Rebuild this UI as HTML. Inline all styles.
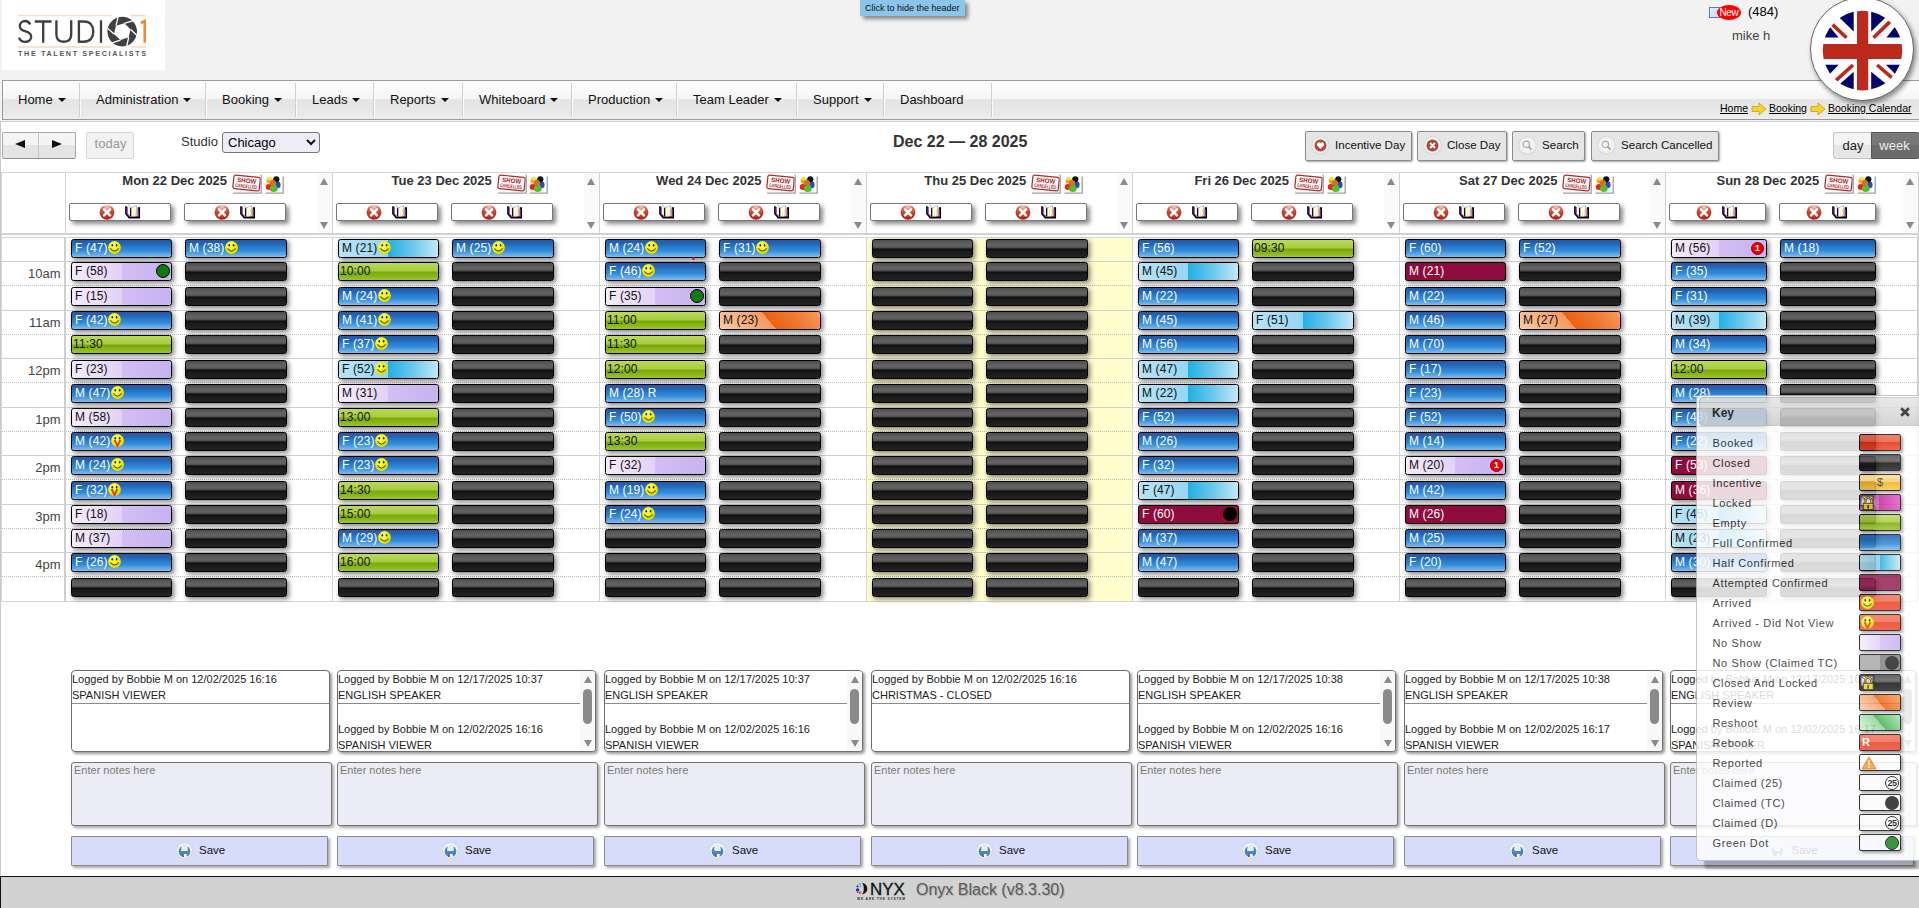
<!DOCTYPE html><html><head><meta charset="utf-8"><style>
*{box-sizing:border-box;margin:0;padding:0}
html,body{width:1919px;height:908px;overflow:hidden;background:#f2f2f2;font-family:"Liberation Sans",sans-serif;color:#333;position:relative}
.a{position:absolute}
.logo{left:2px;top:0;width:163px;height:70px;background:#fff}
.tip{left:860px;top:0;width:105px;height:16px;background:#8cc4ea;box-shadow:3px 3px 4px rgba(0,0,0,.45);font-size:9px;color:#111;line-height:16px;padding-left:5px;white-space:nowrap}
.nav{left:2px;top:80px;width:1925px;height:40px;border:1px solid #9a9a9a;background:linear-gradient(#fefefe 0%,#f6f6f6 45%,#e4e4e4 50%,#e8e8e8 80%,#eeeeee 100%)}
.ni{position:absolute;top:0;height:38px;font-size:13px;color:#111;line-height:38px;white-space:nowrap}
.ns{position:absolute;top:2px;width:2px;height:34px;border-left:1px solid #d0d0d0;border-right:1px solid #fafafa}
.car{display:inline-block;width:0;height:0;border-left:4px solid transparent;border-right:4px solid transparent;border-top:4.5px solid #111;vertical-align:middle;margin-left:5px;position:relative;top:-1px}
.content{left:0;top:121px;width:1919px;height:755px;background:#fff;border-top:1px solid #cfcfcf;border-left:1px solid #c8c8c8}
.bc{font-size:10.5px;color:#000;text-decoration:underline;white-space:nowrap;line-height:12px}
.btn{border:1px solid #8a8a8a;border-radius:2px;background:#e6e6e6;box-shadow:1px 1px 2px rgba(0,0,0,.35);font-size:11.6px;color:#111;white-space:nowrap;line-height:27px}
.ico{position:absolute;top:5px;width:17px;height:17px;border-radius:50%;background:radial-gradient(circle at 50% 45%,#fafafa 0%,#f0f0f0 60%,#d8d8d8 100%);box-shadow:0 0 1px rgba(0,0,0,.4)}
.hl{background:#d2d2d2}
.vl{background:#d2d2d2}
.ev{position:absolute;height:19px;border:1px solid #000;border-radius:2.5px;box-shadow:2px 2px 5px rgba(0,0,0,.5);font-size:12px;line-height:17px;padding-left:3px;white-space:nowrap;overflow:hidden;color:#111;letter-spacing:0.12px}
.bk{background:linear-gradient(#4c4c4c 0%,#5e5e5e 20%,#636363 35%,#474747 48%,#0d0d0d 52%,#1a1a1a 65%,#232323 100%);border-color:#000}
.fc{background:linear-gradient(#2459a6 0%,#2766b6 25%,#2a7fd0 45%,#2e88d8 60%,#4c9ce2 75%,#80bcec 100%);color:#fff}
.ns2{background:linear-gradient(90deg,#f4ecfc 0%,#e2d2f6 50%,#d4bef4 50%,#c8b2f0 100%)}
.em{background:linear-gradient(#bcd85c 0%,#a9cc40 45%,#7aaa0a 55%,#86b418 75%,#9cc62e 100%);padding-left:1px}
.hc{background:linear-gradient(90deg,#b8e4f6 0%,#94d6f2 50%,#22b0e2 50%,#6cc8ec 75%,#c4e8f6 100%)}
.ac{background:#8e0c3c;color:#fff}
.rv{background:linear-gradient(50deg,#fdcaa4 0%,#f29a5e 49%,#ec600e 49%,#f07a34 75%,#f89a5c 100%)}
.smi{display:inline-block;width:13px;height:13px;vertical-align:top;margin-top:1px;margin-left:0.5px;position:relative}.smi svg{position:absolute;left:0;top:0}


.gd{position:absolute;right:1px;top:1px;width:14px;height:14px;border-radius:50%;background:#0a7a0a;border:1.3px solid #000}
.bd{position:absolute;right:1px;top:1px;width:14px;height:14px;border-radius:50%;background:#000}
.rb{position:absolute;right:2px;top:2px;width:13px;height:13px;border-radius:50%;background:#e00;border:1px solid #900;color:#fff;font-size:9px;font-weight:bold;line-height:11px;text-align:center}
.tl{position:absolute;font-size:13px;color:#444;text-align:right;width:56px;left:3px}
.hbtn{position:absolute;height:18px;background:#fff;border:1px solid #777;border-radius:2px;box-shadow:3px 3px 4px rgba(0,0,0,.45)}
.dt{position:absolute;font-size:13px;font-weight:bold;color:#333;white-space:nowrap;line-height:15px}
.log{position:absolute;height:82px;border:1px solid #6e6e6e;border-radius:4px;background:#fff;box-shadow:2px 2px 3px rgba(0,0,0,.4);font-size:11px;color:#222;line-height:16px;overflow:hidden}
.ta{position:absolute;height:64px;border:1px solid #767676;border-radius:3px;background:#ececf6;box-shadow:2px 2px 3px rgba(0,0,0,.35);font-size:11px;color:#7a7a7a;padding:1px 2px}
.sv{position:absolute;height:30px;border:1px solid #8a8a8a;border-radius:1px;background:#d6dcfa;box-shadow:2px 2px 3px rgba(0,0,0,.35);font-size:12px;color:#111}
</style></head><body><div class="a logo">
<svg width="163" height="70" viewBox="2 0 163 70" style="position:absolute;left:0;top:0">
<g stroke="#fbd8bc" stroke-width="1.4">
<line x1="18" y1="15.6" x2="111.5" y2="15.6"/><line x1="130.6" y1="15.6" x2="145.8" y2="15.6"/>
<line x1="18" y1="47" x2="111.5" y2="47"/><line x1="130.6" y1="47" x2="145.8" y2="47"/>
</g>
<g fill="none" stroke="#404042" stroke-width="2.35">
<path d="M30.2 24.4 C29 22 27.2 21 25.2 21 C22 21 19.8 23.2 19.8 26.2 C19.8 29.5 22.5 30.5 25.6 31.3 C29 32.2 31.2 34 31.2 36.8 C31.2 40 28.5 41.8 25.2 41.8 C22 41.8 19.8 40 19 37.6"/>
<path d="M34.8 21.5 H51.6 M43.2 21.5 V42.8"/>
<path d="M56.4 20.3 V34.5 C56.4 39.5 59.5 41.7 63.8 41.7 C68.1 41.7 71.2 39.5 71.2 34.5 V20.3"/>
<path d="M78.9 20.3 V42.8 M78.9 21.5 H84 C90 21.5 93.3 25.5 93.3 31.6 C93.3 37.7 90 41.7 84 41.7 H78.9"/>
<path d="M101 20.3 V42.8"/>
</g>
<circle cx="122.2" cy="31.6" r="14.8" fill="#404042"/>
<polygon points="113.95,34.04 116.01,25.63 124.28,23.26 130.47,29.23 128.69,37.24 120.41,40.01" fill="#fff"/>
<g stroke="#fff" stroke-width="1.3"><line x1="113.95" y1="34.04" x2="107.03" y2="27.64"/><line x1="116.01" y1="25.63" x2="118.26" y2="16.43"/><line x1="124.28" y1="23.26" x2="133.40" y2="20.64"/><line x1="130.47" y1="29.23" x2="137.29" y2="35.82"/><line x1="128.69" y1="37.24" x2="126.61" y2="46.64"/><line x1="120.41" y1="40.01" x2="111.45" y2="43.01"/></g>
<path d="M140.8 23.2 L144.7 21 V42.8" fill="none" stroke="#f28a2a" stroke-width="2.5"/>
<text x="18" y="55.8" font-family="Liberation Sans" font-size="7.2" font-weight="bold" fill="#5a5a5c" textLength="128" lengthAdjust="spacing">THE TALENT SPECIALISTS</text>
</svg>
</div>
<div class="a tip">Click to hide the header</div>
<div class="a" style="left:1709px;top:7px;width:11px;height:11px;border:1px solid #4f7fc8;background:linear-gradient(135deg,#e8f0fa,#c8d8f0)"></div>
<div class="a" style="left:1717px;top:5px;width:24px;height:15px;border-radius:50%;background:#f00;color:#fff;font-size:10px;line-height:15px;text-align:center;letter-spacing:-0.3px">New</div>
<div class="a" style="left:1748px;top:4px;font-size:13px;color:#000;line-height:16px">(484)</div>
<div class="a" style="left:1732px;top:27.5px;font-size:13px;color:#444;line-height:16px">mike h</div>
<div class="a nav">
<div class="ni" style="left:15px">Home<span class=car></span></div>
<div class="ns" style="left:76px"></div>
<div class="ni" style="left:93px">Administration<span class=car></span></div>
<div class="ns" style="left:202px"></div>
<div class="ni" style="left:219px">Booking<span class=car></span></div>
<div class="ns" style="left:292px"></div>
<div class="ni" style="left:309px">Leads<span class=car></span></div>
<div class="ns" style="left:370px"></div>
<div class="ni" style="left:387px">Reports<span class=car></span></div>
<div class="ns" style="left:459px"></div>
<div class="ni" style="left:476px">Whiteboard<span class=car></span></div>
<div class="ns" style="left:568px"></div>
<div class="ni" style="left:585px">Production<span class=car></span></div>
<div class="ns" style="left:673px"></div>
<div class="ni" style="left:690px">Team Leader<span class=car></span></div>
<div class="ns" style="left:793px"></div>
<div class="ni" style="left:810px">Support<span class=car></span></div>
<div class="ns" style="left:880px"></div>
<div class="ni" style="left:897px">Dashboard</div>
<div class="ns" style="left:988px"></div>
</div>
<div class="a" style="left:1810px;top:-3px;width:104px;height:104px;border-radius:50%;background:#fff;border:1px solid #666;box-shadow:2px 3px 5px rgba(0,0,0,.45)"></div>
<svg class="a" style="left:1822px;top:10px" width="81" height="81" viewBox="0 0 81 81">
<defs><clipPath id="fc"><circle cx="40.5" cy="40.6" r="39.8"/></clipPath></defs>
<g clip-path="url(#fc)">
<rect x="-5" y="-5" width="91" height="91" fill="#fbfbfb"/>
<polygon points="31.7,21.4 31.7,-5 4.4,-5" fill="#00036a"/>
<polygon points="16.7,27.6 -5,27.6 -5,1.4" fill="#00036a"/>
<polygon points="49.2,21.4 49.2,-5 76.3,-5" fill="#00036a"/>
<polygon points="64.5,27.6 86,27.6 86,0" fill="#00036a"/>
<polygon points="16.7,54.8 -5,54.8 -5,77" fill="#00036a"/>
<polygon points="31.7,61.7 31.7,86 4.4,86" fill="#00036a"/>
<polygon points="49.2,61.7 49.2,86 79,86" fill="#00036a"/>
<polygon points="64,54.8 86,54.8 86,77" fill="#00036a"/>
<g stroke="#bc2a1e" stroke-width="3.6">
<line x1="8.5" y1="12.6" x2="24.5" y2="27.8"/>
<line x1="69" y1="10.6" x2="51.5" y2="27.8"/>
<line x1="13.2" y1="71.2" x2="31" y2="55"/>
<line x1="55.2" y1="55" x2="70.4" y2="68.2"/>
</g>
<rect x="35" y="-5" width="11.2" height="91" fill="#bc2a1e"/>
<rect x="-5" y="34" width="91" height="15" fill="#bc2a1e"/>
</g></svg>
<div class="a bc" style="left:1720px;top:102px">Home</div>
<svg class="a" style="left:1751px;top:102px" width="16" height="14" viewBox="0 0 16 14"><path d="M1 4.5 H8 V1 L15 7 L8 13 V9.5 H1 Z" fill="#f6d22a" stroke="#c8a010" stroke-width="0.8"/></svg>
<div class="a bc" style="left:1769px;top:102px">Booking</div>
<svg class="a" style="left:1810px;top:102px" width="16" height="14" viewBox="0 0 16 14"><path d="M1 4.5 H8 V1 L15 7 L8 13 V9.5 H1 Z" fill="#f6d22a" stroke="#c8a010" stroke-width="0.8"/></svg>
<div class="a bc" style="left:1828px;top:102px">Booking Calendar</div>
<div class="a content"></div>
<div class="a" style="left:1.5px;top:132px;width:74px;height:27px;border:1px solid #aaa;border-bottom-color:#8f8f8f;border-radius:2px;background:linear-gradient(#f4f4f4 0%,#f4f4f4 50%,#e4e4e4 50%,#e4e4e4 100%)"></div>
<div class="a" style="left:38px;top:133px;width:1px;height:25px;background:#c4c4c4"></div>
<div class="a" style="left:15px;top:140px;width:0;height:0;border-top:4.5px solid transparent;border-bottom:4.5px solid transparent;border-right:10px solid #111"></div>
<div class="a" style="left:52px;top:140px;width:0;height:0;border-top:4.5px solid transparent;border-bottom:4.5px solid transparent;border-left:10px solid #111"></div>
<div class="a" style="left:86px;top:132px;width:48px;height:27px;border:1px solid #d6d6d6;border-radius:2px;background:#f2f2f2;color:#999;font-size:13px;line-height:22px;text-align:center;padding-left:1px">today</div>
<div class="a" style="left:181px;top:134px;font-size:13px;color:#333;line-height:15px">Studio</div>
<div class="a" style="left:222px;top:132px;width:98px;height:21px;border:1px solid #767676;border-radius:3px;background:#ededf8;font-size:13px;color:#000;line-height:19px;padding-left:5px">Chicago<svg style="position:absolute;left:83px;top:6px" width="10" height="7" viewBox="0 0 10 7"><path d="M1 1 L5 5 L9 1" fill="none" stroke="#111" stroke-width="2"/></svg></div>
<div class="a" style="left:893px;top:133px;font-size:16px;font-weight:bold;color:#333;line-height:18px;white-space:nowrap">Dec 22 — 28 2025</div>

<div class="a btn" style="left:1305px;top:131px;width:107px;height:30px"><div class="ico" style="left:6px"><svg width="17" height="17" viewBox="0 0 17 17" style="position:absolute;left:0;top:0"><circle cx="8.5" cy="8.5" r="6" fill="#b44a3c"/><path d="M8.5 12 L5.2 8.6 A1.9 1.9 0 0 1 8.5 6.3 A1.9 1.9 0 0 1 11.8 8.6 Z" fill="#fff"/></svg></div><span style="position:absolute;left:29px;top:-1px">Incentive Day</span></div>
<div class="a btn" style="left:1417px;top:131px;width:90px;height:30px"><div class="ico" style="left:6px"><svg width="17" height="17" viewBox="0 0 17 17" style="position:absolute;left:0;top:0"><circle cx="8.5" cy="8.5" r="6" fill="#a8483e"/><path d="M6 6 L11 11 M11 6 L6 11" stroke="#fff" stroke-width="1.8"/></svg></div><span style="position:absolute;left:29px;top:-1px">Close Day</span></div>
<div class="a btn" style="left:1512px;top:131px;width:73px;height:30px"><div class="ico" style="left:6px"><svg width="17" height="17" viewBox="0 0 17 17" style="position:absolute;left:0;top:0"><circle cx="7.3" cy="7.3" r="3.2" fill="#eef4fa" stroke="#9aa" stroke-width="1.1"/><path d="M9.6 9.6 L12.6 12.6" stroke="#c9a060" stroke-width="1.8"/></svg></div><span style="position:absolute;left:29px;top:-1px">Search</span></div>
<div class="a btn" style="left:1591px;top:131px;width:128px;height:30px"><div class="ico" style="left:6px"><svg width="17" height="17" viewBox="0 0 17 17" style="position:absolute;left:0;top:0"><circle cx="7.3" cy="7.3" r="3.2" fill="#eef4fa" stroke="#9aa" stroke-width="1.1"/><path d="M9.6 9.6 L12.6 12.6" stroke="#c9a060" stroke-width="1.8"/></svg></div><span style="position:absolute;left:29px;top:-1px">Search Cancelled</span></div>
<div class="a" style="left:1833px;top:132px;width:39px;height:27px;border:1px solid #c4c4c4;border-right:none;border-radius:3px 0 0 3px;background:linear-gradient(#f4f4f4 0%,#f4f4f4 50%,#e6e6e6 50%,#e6e6e6 100%);font-size:13px;color:#222;line-height:25px;text-align:center">day</div>
<div class="a" style="left:1871px;top:132px;width:49px;height:27px;border:1px solid #555;border-radius:0 3px 3px 0;padding-right:2px;background:linear-gradient(#7a7a7a 0%,#777 50%,#6c6c6c 50%,#6c6c6c 100%);font-size:13px;color:#f0f0f0;line-height:25px;text-align:center">week</div>
<div class="a" style="left:1px;top:172px;width:1917px;height:1px;background:#d6d6d6"></div>
<div class="a" style="left:1px;top:172px;width:1px;height:429px;background:#d6d6d6"></div>
<div class="a" style="left:1917px;top:172px;width:2px;height:430px;background:#cfcfcf"></div>
<div class="a" style="left:1px;top:233px;width:1917px;height:2px;background:#d2d2d2"></div>
<div class="a" style="left:1px;top:237px;width:1917px;height:1px;background:#d6d6d6"></div>
<div class="a vl" style="left:65px;top:172px;width:1px;height:61px"></div>
<div class="a" style="left:317px;top:173px;width:15px;height:60px;background:#fafafa"></div>
<div class="a" style="left:320px;top:178px;width:0;height:0;border-left:4.5px solid transparent;border-right:4.5px solid transparent;border-bottom:7px solid #8a8a8a"></div>
<div class="a" style="left:320px;top:222px;width:0;height:0;border-left:4.5px solid transparent;border-right:4.5px solid transparent;border-top:7px solid #8a8a8a"></div>
<div class="dt" style="left:122.3px;top:173px">Mon 22 Dec 2025</div>
<div class="a" style="left:232.1px;top:174px;width:30px;height:20px"><svg width="30" height="20" viewBox="0 0 30 20"><g transform="rotate(6 14.5 9)"><rect x="1.3" y="2.2" width="26.5" height="13.6" rx="1.8" fill="#fff" stroke="#b02828" stroke-width="1.2"/><text x="14.5" y="8.9" font-family="Liberation Sans" font-size="6.6" font-weight="bold" fill="#b02222" text-anchor="middle" textLength="19" lengthAdjust="spacingAndGlyphs">SHOW</text><text x="14.5" y="14" font-family="Liberation Sans" font-size="5" font-weight="bold" fill="#b02222" text-anchor="middle" textLength="22" lengthAdjust="spacingAndGlyphs">CANCELLED</text></g><path d="M29.2 0.5 V19.2 H1" fill="none" stroke="#a0a0a0" stroke-width="1.3"/></svg></div>
<div class="a" style="left:264.6px;top:176px;width:19px;height:18px"><svg width="19" height="18" viewBox="0 0 19 18"><ellipse cx="3.9" cy="10.9" rx="3.2" ry="3" fill="#e82810"/><ellipse cx="13" cy="8.8" rx="2.6" ry="3.4" fill="#2050b0"/><circle cx="4.8" cy="4.6" r="3.2" fill="#f0a020"/><path d="M1.8 4.2 A3 3 0 0 1 7.8 4.2 Z" fill="#f8e040"/><circle cx="11.3" cy="3.3" r="3.1" fill="#111"/><ellipse cx="8.8" cy="12.8" rx="3.9" ry="3.2" fill="#50c030"/><circle cx="8" cy="7.2" r="3.1" fill="#c8762a"/><path d="M18.2 0.5 V17.2 H0.5" fill="none" stroke="#a0a0a0" stroke-width="1.3"/></svg></div>
<div class="hbtn" style="left:69px;top:203px;width:102px"><div class="a" style="left:29px;top:0px"><svg width="16" height="16" viewBox="0 0 16 16"><defs><radialGradient id="rg" cx="50%" cy="10%" r="95%"><stop offset="0" stop-color="#f6d0c0"/><stop offset="0.45" stop-color="#d4503c"/><stop offset="1" stop-color="#a01c10"/></radialGradient></defs><circle cx="8" cy="8.3" r="7.4" fill="url(#rg)"/><path d="M5 5.3 L11 11.3 M11 5.3 L5 11.3" stroke="#fff" stroke-width="2.5" stroke-linecap="round"/></svg></div><div class="a" style="left:55px;top:0px"><svg width="16" height="15" viewBox="0 0 16 15"><path d="M1 2.2 V9.8 L4.3 13.7 H14.2 V4.2 H12.8" fill="none" stroke="#000" stroke-width="1.7"/><path d="M2.2 2.8 V9.4 L4.7 12.4 H13 V5" fill="none" stroke="#8a0a9a" stroke-width="1"/><path d="M3.2 0.6 C4.3 1.2 5 2.6 5.3 4 V12.6 H9.5 C10.8 12.3 11.6 11.3 11.6 10 V2 H9.8 C9 2.3 8.3 2.8 7.9 3.5 L5.3 4" fill="#fff" stroke="#888" stroke-width="0.6"/><path d="M5.1 4.3 L6.3 4.1 V12.5 H5.1 Z" fill="#000"/><g fill="#f0f000"><circle cx="8.6" cy="7.2" r="0.6"/><circle cx="8.6" cy="9.3" r="0.6"/><circle cx="8.6" cy="11.3" r="0.6"/><circle cx="10.5" cy="6.2" r="0.6"/><circle cx="10.5" cy="8.2" r="0.6"/><circle cx="10.5" cy="10.2" r="0.6"/></g></svg></div></div>
<div class="hbtn" style="left:184px;top:203px;width:102px"><div class="a" style="left:29px;top:0px"><svg width="16" height="16" viewBox="0 0 16 16"><defs><radialGradient id="rg" cx="50%" cy="10%" r="95%"><stop offset="0" stop-color="#f6d0c0"/><stop offset="0.45" stop-color="#d4503c"/><stop offset="1" stop-color="#a01c10"/></radialGradient></defs><circle cx="8" cy="8.3" r="7.4" fill="url(#rg)"/><path d="M5 5.3 L11 11.3 M11 5.3 L5 11.3" stroke="#fff" stroke-width="2.5" stroke-linecap="round"/></svg></div><div class="a" style="left:55px;top:0px"><svg width="16" height="15" viewBox="0 0 16 15"><path d="M1 2.2 V9.8 L4.3 13.7 H14.2 V4.2 H12.8" fill="none" stroke="#000" stroke-width="1.7"/><path d="M2.2 2.8 V9.4 L4.7 12.4 H13 V5" fill="none" stroke="#8a0a9a" stroke-width="1"/><path d="M3.2 0.6 C4.3 1.2 5 2.6 5.3 4 V12.6 H9.5 C10.8 12.3 11.6 11.3 11.6 10 V2 H9.8 C9 2.3 8.3 2.8 7.9 3.5 L5.3 4" fill="#fff" stroke="#888" stroke-width="0.6"/><path d="M5.1 4.3 L6.3 4.1 V12.5 H5.1 Z" fill="#000"/><g fill="#f0f000"><circle cx="8.6" cy="7.2" r="0.6"/><circle cx="8.6" cy="9.3" r="0.6"/><circle cx="8.6" cy="11.3" r="0.6"/><circle cx="10.5" cy="6.2" r="0.6"/><circle cx="10.5" cy="8.2" r="0.6"/><circle cx="10.5" cy="10.2" r="0.6"/></g></svg></div></div>
<div class="a vl" style="left:332px;top:172px;width:1px;height:61px"></div>
<div class="a" style="left:584px;top:173px;width:15px;height:60px;background:#fafafa"></div>
<div class="a" style="left:587px;top:178px;width:0;height:0;border-left:4.5px solid transparent;border-right:4.5px solid transparent;border-bottom:7px solid #8a8a8a"></div>
<div class="a" style="left:587px;top:222px;width:0;height:0;border-left:4.5px solid transparent;border-right:4.5px solid transparent;border-top:7px solid #8a8a8a"></div>
<div class="dt" style="left:391.6px;top:173px">Tue 23 Dec 2025</div>
<div class="a" style="left:496.8px;top:174px;width:30px;height:20px"><svg width="30" height="20" viewBox="0 0 30 20"><g transform="rotate(6 14.5 9)"><rect x="1.3" y="2.2" width="26.5" height="13.6" rx="1.8" fill="#fff" stroke="#b02828" stroke-width="1.2"/><text x="14.5" y="8.9" font-family="Liberation Sans" font-size="6.6" font-weight="bold" fill="#b02222" text-anchor="middle" textLength="19" lengthAdjust="spacingAndGlyphs">SHOW</text><text x="14.5" y="14" font-family="Liberation Sans" font-size="5" font-weight="bold" fill="#b02222" text-anchor="middle" textLength="22" lengthAdjust="spacingAndGlyphs">CANCELLED</text></g><path d="M29.2 0.5 V19.2 H1" fill="none" stroke="#a0a0a0" stroke-width="1.3"/></svg></div>
<div class="a" style="left:529.3px;top:176px;width:19px;height:18px"><svg width="19" height="18" viewBox="0 0 19 18"><ellipse cx="3.9" cy="10.9" rx="3.2" ry="3" fill="#e82810"/><ellipse cx="13" cy="8.8" rx="2.6" ry="3.4" fill="#2050b0"/><circle cx="4.8" cy="4.6" r="3.2" fill="#f0a020"/><path d="M1.8 4.2 A3 3 0 0 1 7.8 4.2 Z" fill="#f8e040"/><circle cx="11.3" cy="3.3" r="3.1" fill="#111"/><ellipse cx="8.8" cy="12.8" rx="3.9" ry="3.2" fill="#50c030"/><circle cx="8" cy="7.2" r="3.1" fill="#c8762a"/><path d="M18.2 0.5 V17.2 H0.5" fill="none" stroke="#a0a0a0" stroke-width="1.3"/></svg></div>
<div class="hbtn" style="left:336px;top:203px;width:102px"><div class="a" style="left:29px;top:0px"><svg width="16" height="16" viewBox="0 0 16 16"><defs><radialGradient id="rg" cx="50%" cy="10%" r="95%"><stop offset="0" stop-color="#f6d0c0"/><stop offset="0.45" stop-color="#d4503c"/><stop offset="1" stop-color="#a01c10"/></radialGradient></defs><circle cx="8" cy="8.3" r="7.4" fill="url(#rg)"/><path d="M5 5.3 L11 11.3 M11 5.3 L5 11.3" stroke="#fff" stroke-width="2.5" stroke-linecap="round"/></svg></div><div class="a" style="left:55px;top:0px"><svg width="16" height="15" viewBox="0 0 16 15"><path d="M1 2.2 V9.8 L4.3 13.7 H14.2 V4.2 H12.8" fill="none" stroke="#000" stroke-width="1.7"/><path d="M2.2 2.8 V9.4 L4.7 12.4 H13 V5" fill="none" stroke="#8a0a9a" stroke-width="1"/><path d="M3.2 0.6 C4.3 1.2 5 2.6 5.3 4 V12.6 H9.5 C10.8 12.3 11.6 11.3 11.6 10 V2 H9.8 C9 2.3 8.3 2.8 7.9 3.5 L5.3 4" fill="#fff" stroke="#888" stroke-width="0.6"/><path d="M5.1 4.3 L6.3 4.1 V12.5 H5.1 Z" fill="#000"/><g fill="#f0f000"><circle cx="8.6" cy="7.2" r="0.6"/><circle cx="8.6" cy="9.3" r="0.6"/><circle cx="8.6" cy="11.3" r="0.6"/><circle cx="10.5" cy="6.2" r="0.6"/><circle cx="10.5" cy="8.2" r="0.6"/><circle cx="10.5" cy="10.2" r="0.6"/></g></svg></div></div>
<div class="hbtn" style="left:451px;top:203px;width:102px"><div class="a" style="left:29px;top:0px"><svg width="16" height="16" viewBox="0 0 16 16"><defs><radialGradient id="rg" cx="50%" cy="10%" r="95%"><stop offset="0" stop-color="#f6d0c0"/><stop offset="0.45" stop-color="#d4503c"/><stop offset="1" stop-color="#a01c10"/></radialGradient></defs><circle cx="8" cy="8.3" r="7.4" fill="url(#rg)"/><path d="M5 5.3 L11 11.3 M11 5.3 L5 11.3" stroke="#fff" stroke-width="2.5" stroke-linecap="round"/></svg></div><div class="a" style="left:55px;top:0px"><svg width="16" height="15" viewBox="0 0 16 15"><path d="M1 2.2 V9.8 L4.3 13.7 H14.2 V4.2 H12.8" fill="none" stroke="#000" stroke-width="1.7"/><path d="M2.2 2.8 V9.4 L4.7 12.4 H13 V5" fill="none" stroke="#8a0a9a" stroke-width="1"/><path d="M3.2 0.6 C4.3 1.2 5 2.6 5.3 4 V12.6 H9.5 C10.8 12.3 11.6 11.3 11.6 10 V2 H9.8 C9 2.3 8.3 2.8 7.9 3.5 L5.3 4" fill="#fff" stroke="#888" stroke-width="0.6"/><path d="M5.1 4.3 L6.3 4.1 V12.5 H5.1 Z" fill="#000"/><g fill="#f0f000"><circle cx="8.6" cy="7.2" r="0.6"/><circle cx="8.6" cy="9.3" r="0.6"/><circle cx="8.6" cy="11.3" r="0.6"/><circle cx="10.5" cy="6.2" r="0.6"/><circle cx="10.5" cy="8.2" r="0.6"/><circle cx="10.5" cy="10.2" r="0.6"/></g></svg></div></div>
<div class="a vl" style="left:599px;top:172px;width:1px;height:61px"></div>
<div class="a" style="left:851px;top:173px;width:15px;height:60px;background:#fafafa"></div>
<div class="a" style="left:854px;top:178px;width:0;height:0;border-left:4.5px solid transparent;border-right:4.5px solid transparent;border-bottom:7px solid #8a8a8a"></div>
<div class="a" style="left:854px;top:222px;width:0;height:0;border-left:4.5px solid transparent;border-right:4.5px solid transparent;border-top:7px solid #8a8a8a"></div>
<div class="dt" style="left:656.1px;top:173px">Wed 24 Dec 2025</div>
<div class="a" style="left:766.4px;top:174px;width:30px;height:20px"><svg width="30" height="20" viewBox="0 0 30 20"><g transform="rotate(6 14.5 9)"><rect x="1.3" y="2.2" width="26.5" height="13.6" rx="1.8" fill="#fff" stroke="#b02828" stroke-width="1.2"/><text x="14.5" y="8.9" font-family="Liberation Sans" font-size="6.6" font-weight="bold" fill="#b02222" text-anchor="middle" textLength="19" lengthAdjust="spacingAndGlyphs">SHOW</text><text x="14.5" y="14" font-family="Liberation Sans" font-size="5" font-weight="bold" fill="#b02222" text-anchor="middle" textLength="22" lengthAdjust="spacingAndGlyphs">CANCELLED</text></g><path d="M29.2 0.5 V19.2 H1" fill="none" stroke="#a0a0a0" stroke-width="1.3"/></svg></div>
<div class="a" style="left:798.9px;top:176px;width:19px;height:18px"><svg width="19" height="18" viewBox="0 0 19 18"><ellipse cx="3.9" cy="10.9" rx="3.2" ry="3" fill="#e82810"/><ellipse cx="13" cy="8.8" rx="2.6" ry="3.4" fill="#2050b0"/><circle cx="4.8" cy="4.6" r="3.2" fill="#f0a020"/><path d="M1.8 4.2 A3 3 0 0 1 7.8 4.2 Z" fill="#f8e040"/><circle cx="11.3" cy="3.3" r="3.1" fill="#111"/><ellipse cx="8.8" cy="12.8" rx="3.9" ry="3.2" fill="#50c030"/><circle cx="8" cy="7.2" r="3.1" fill="#c8762a"/><path d="M18.2 0.5 V17.2 H0.5" fill="none" stroke="#a0a0a0" stroke-width="1.3"/></svg></div>
<div class="hbtn" style="left:603px;top:203px;width:102px"><div class="a" style="left:29px;top:0px"><svg width="16" height="16" viewBox="0 0 16 16"><defs><radialGradient id="rg" cx="50%" cy="10%" r="95%"><stop offset="0" stop-color="#f6d0c0"/><stop offset="0.45" stop-color="#d4503c"/><stop offset="1" stop-color="#a01c10"/></radialGradient></defs><circle cx="8" cy="8.3" r="7.4" fill="url(#rg)"/><path d="M5 5.3 L11 11.3 M11 5.3 L5 11.3" stroke="#fff" stroke-width="2.5" stroke-linecap="round"/></svg></div><div class="a" style="left:55px;top:0px"><svg width="16" height="15" viewBox="0 0 16 15"><path d="M1 2.2 V9.8 L4.3 13.7 H14.2 V4.2 H12.8" fill="none" stroke="#000" stroke-width="1.7"/><path d="M2.2 2.8 V9.4 L4.7 12.4 H13 V5" fill="none" stroke="#8a0a9a" stroke-width="1"/><path d="M3.2 0.6 C4.3 1.2 5 2.6 5.3 4 V12.6 H9.5 C10.8 12.3 11.6 11.3 11.6 10 V2 H9.8 C9 2.3 8.3 2.8 7.9 3.5 L5.3 4" fill="#fff" stroke="#888" stroke-width="0.6"/><path d="M5.1 4.3 L6.3 4.1 V12.5 H5.1 Z" fill="#000"/><g fill="#f0f000"><circle cx="8.6" cy="7.2" r="0.6"/><circle cx="8.6" cy="9.3" r="0.6"/><circle cx="8.6" cy="11.3" r="0.6"/><circle cx="10.5" cy="6.2" r="0.6"/><circle cx="10.5" cy="8.2" r="0.6"/><circle cx="10.5" cy="10.2" r="0.6"/></g></svg></div></div>
<div class="hbtn" style="left:718px;top:203px;width:102px"><div class="a" style="left:29px;top:0px"><svg width="16" height="16" viewBox="0 0 16 16"><defs><radialGradient id="rg" cx="50%" cy="10%" r="95%"><stop offset="0" stop-color="#f6d0c0"/><stop offset="0.45" stop-color="#d4503c"/><stop offset="1" stop-color="#a01c10"/></radialGradient></defs><circle cx="8" cy="8.3" r="7.4" fill="url(#rg)"/><path d="M5 5.3 L11 11.3 M11 5.3 L5 11.3" stroke="#fff" stroke-width="2.5" stroke-linecap="round"/></svg></div><div class="a" style="left:55px;top:0px"><svg width="16" height="15" viewBox="0 0 16 15"><path d="M1 2.2 V9.8 L4.3 13.7 H14.2 V4.2 H12.8" fill="none" stroke="#000" stroke-width="1.7"/><path d="M2.2 2.8 V9.4 L4.7 12.4 H13 V5" fill="none" stroke="#8a0a9a" stroke-width="1"/><path d="M3.2 0.6 C4.3 1.2 5 2.6 5.3 4 V12.6 H9.5 C10.8 12.3 11.6 11.3 11.6 10 V2 H9.8 C9 2.3 8.3 2.8 7.9 3.5 L5.3 4" fill="#fff" stroke="#888" stroke-width="0.6"/><path d="M5.1 4.3 L6.3 4.1 V12.5 H5.1 Z" fill="#000"/><g fill="#f0f000"><circle cx="8.6" cy="7.2" r="0.6"/><circle cx="8.6" cy="9.3" r="0.6"/><circle cx="8.6" cy="11.3" r="0.6"/><circle cx="10.5" cy="6.2" r="0.6"/><circle cx="10.5" cy="8.2" r="0.6"/><circle cx="10.5" cy="10.2" r="0.6"/></g></svg></div></div>
<div class="a vl" style="left:866px;top:172px;width:1px;height:61px"></div>
<div class="a" style="left:1117px;top:173px;width:15px;height:60px;background:#fafafa"></div>
<div class="a" style="left:1120px;top:178px;width:0;height:0;border-left:4.5px solid transparent;border-right:4.5px solid transparent;border-bottom:7px solid #8a8a8a"></div>
<div class="a" style="left:1120px;top:222px;width:0;height:0;border-left:4.5px solid transparent;border-right:4.5px solid transparent;border-top:7px solid #8a8a8a"></div>
<div class="dt" style="left:924.3px;top:173px">Thu 25 Dec 2025</div>
<div class="a" style="left:1031.2px;top:174px;width:30px;height:20px"><svg width="30" height="20" viewBox="0 0 30 20"><g transform="rotate(6 14.5 9)"><rect x="1.3" y="2.2" width="26.5" height="13.6" rx="1.8" fill="#fff" stroke="#b02828" stroke-width="1.2"/><text x="14.5" y="8.9" font-family="Liberation Sans" font-size="6.6" font-weight="bold" fill="#b02222" text-anchor="middle" textLength="19" lengthAdjust="spacingAndGlyphs">SHOW</text><text x="14.5" y="14" font-family="Liberation Sans" font-size="5" font-weight="bold" fill="#b02222" text-anchor="middle" textLength="22" lengthAdjust="spacingAndGlyphs">CANCELLED</text></g><path d="M29.2 0.5 V19.2 H1" fill="none" stroke="#a0a0a0" stroke-width="1.3"/></svg></div>
<div class="a" style="left:1063.7px;top:176px;width:19px;height:18px"><svg width="19" height="18" viewBox="0 0 19 18"><ellipse cx="3.9" cy="10.9" rx="3.2" ry="3" fill="#e82810"/><ellipse cx="13" cy="8.8" rx="2.6" ry="3.4" fill="#2050b0"/><circle cx="4.8" cy="4.6" r="3.2" fill="#f0a020"/><path d="M1.8 4.2 A3 3 0 0 1 7.8 4.2 Z" fill="#f8e040"/><circle cx="11.3" cy="3.3" r="3.1" fill="#111"/><ellipse cx="8.8" cy="12.8" rx="3.9" ry="3.2" fill="#50c030"/><circle cx="8" cy="7.2" r="3.1" fill="#c8762a"/><path d="M18.2 0.5 V17.2 H0.5" fill="none" stroke="#a0a0a0" stroke-width="1.3"/></svg></div>
<div class="hbtn" style="left:870px;top:203px;width:102px"><div class="a" style="left:29px;top:0px"><svg width="16" height="16" viewBox="0 0 16 16"><defs><radialGradient id="rg" cx="50%" cy="10%" r="95%"><stop offset="0" stop-color="#f6d0c0"/><stop offset="0.45" stop-color="#d4503c"/><stop offset="1" stop-color="#a01c10"/></radialGradient></defs><circle cx="8" cy="8.3" r="7.4" fill="url(#rg)"/><path d="M5 5.3 L11 11.3 M11 5.3 L5 11.3" stroke="#fff" stroke-width="2.5" stroke-linecap="round"/></svg></div><div class="a" style="left:55px;top:0px"><svg width="16" height="15" viewBox="0 0 16 15"><path d="M1 2.2 V9.8 L4.3 13.7 H14.2 V4.2 H12.8" fill="none" stroke="#000" stroke-width="1.7"/><path d="M2.2 2.8 V9.4 L4.7 12.4 H13 V5" fill="none" stroke="#8a0a9a" stroke-width="1"/><path d="M3.2 0.6 C4.3 1.2 5 2.6 5.3 4 V12.6 H9.5 C10.8 12.3 11.6 11.3 11.6 10 V2 H9.8 C9 2.3 8.3 2.8 7.9 3.5 L5.3 4" fill="#fff" stroke="#888" stroke-width="0.6"/><path d="M5.1 4.3 L6.3 4.1 V12.5 H5.1 Z" fill="#000"/><g fill="#f0f000"><circle cx="8.6" cy="7.2" r="0.6"/><circle cx="8.6" cy="9.3" r="0.6"/><circle cx="8.6" cy="11.3" r="0.6"/><circle cx="10.5" cy="6.2" r="0.6"/><circle cx="10.5" cy="8.2" r="0.6"/><circle cx="10.5" cy="10.2" r="0.6"/></g></svg></div></div>
<div class="hbtn" style="left:985px;top:203px;width:102px"><div class="a" style="left:29px;top:0px"><svg width="16" height="16" viewBox="0 0 16 16"><defs><radialGradient id="rg" cx="50%" cy="10%" r="95%"><stop offset="0" stop-color="#f6d0c0"/><stop offset="0.45" stop-color="#d4503c"/><stop offset="1" stop-color="#a01c10"/></radialGradient></defs><circle cx="8" cy="8.3" r="7.4" fill="url(#rg)"/><path d="M5 5.3 L11 11.3 M11 5.3 L5 11.3" stroke="#fff" stroke-width="2.5" stroke-linecap="round"/></svg></div><div class="a" style="left:55px;top:0px"><svg width="16" height="15" viewBox="0 0 16 15"><path d="M1 2.2 V9.8 L4.3 13.7 H14.2 V4.2 H12.8" fill="none" stroke="#000" stroke-width="1.7"/><path d="M2.2 2.8 V9.4 L4.7 12.4 H13 V5" fill="none" stroke="#8a0a9a" stroke-width="1"/><path d="M3.2 0.6 C4.3 1.2 5 2.6 5.3 4 V12.6 H9.5 C10.8 12.3 11.6 11.3 11.6 10 V2 H9.8 C9 2.3 8.3 2.8 7.9 3.5 L5.3 4" fill="#fff" stroke="#888" stroke-width="0.6"/><path d="M5.1 4.3 L6.3 4.1 V12.5 H5.1 Z" fill="#000"/><g fill="#f0f000"><circle cx="8.6" cy="7.2" r="0.6"/><circle cx="8.6" cy="9.3" r="0.6"/><circle cx="8.6" cy="11.3" r="0.6"/><circle cx="10.5" cy="6.2" r="0.6"/><circle cx="10.5" cy="8.2" r="0.6"/><circle cx="10.5" cy="10.2" r="0.6"/></g></svg></div></div>
<div class="a vl" style="left:1132px;top:172px;width:1px;height:61px"></div>
<div class="a" style="left:1384px;top:173px;width:15px;height:60px;background:#fafafa"></div>
<div class="a" style="left:1387px;top:178px;width:0;height:0;border-left:4.5px solid transparent;border-right:4.5px solid transparent;border-bottom:7px solid #8a8a8a"></div>
<div class="a" style="left:1387px;top:222px;width:0;height:0;border-left:4.5px solid transparent;border-right:4.5px solid transparent;border-top:7px solid #8a8a8a"></div>
<div class="dt" style="left:1194.4px;top:173px">Fri 26 Dec 2025</div>
<div class="a" style="left:1294.1px;top:174px;width:30px;height:20px"><svg width="30" height="20" viewBox="0 0 30 20"><g transform="rotate(6 14.5 9)"><rect x="1.3" y="2.2" width="26.5" height="13.6" rx="1.8" fill="#fff" stroke="#b02828" stroke-width="1.2"/><text x="14.5" y="8.9" font-family="Liberation Sans" font-size="6.6" font-weight="bold" fill="#b02222" text-anchor="middle" textLength="19" lengthAdjust="spacingAndGlyphs">SHOW</text><text x="14.5" y="14" font-family="Liberation Sans" font-size="5" font-weight="bold" fill="#b02222" text-anchor="middle" textLength="22" lengthAdjust="spacingAndGlyphs">CANCELLED</text></g><path d="M29.2 0.5 V19.2 H1" fill="none" stroke="#a0a0a0" stroke-width="1.3"/></svg></div>
<div class="a" style="left:1326.6px;top:176px;width:19px;height:18px"><svg width="19" height="18" viewBox="0 0 19 18"><ellipse cx="3.9" cy="10.9" rx="3.2" ry="3" fill="#e82810"/><ellipse cx="13" cy="8.8" rx="2.6" ry="3.4" fill="#2050b0"/><circle cx="4.8" cy="4.6" r="3.2" fill="#f0a020"/><path d="M1.8 4.2 A3 3 0 0 1 7.8 4.2 Z" fill="#f8e040"/><circle cx="11.3" cy="3.3" r="3.1" fill="#111"/><ellipse cx="8.8" cy="12.8" rx="3.9" ry="3.2" fill="#50c030"/><circle cx="8" cy="7.2" r="3.1" fill="#c8762a"/><path d="M18.2 0.5 V17.2 H0.5" fill="none" stroke="#a0a0a0" stroke-width="1.3"/></svg></div>
<div class="hbtn" style="left:1136px;top:203px;width:102px"><div class="a" style="left:29px;top:0px"><svg width="16" height="16" viewBox="0 0 16 16"><defs><radialGradient id="rg" cx="50%" cy="10%" r="95%"><stop offset="0" stop-color="#f6d0c0"/><stop offset="0.45" stop-color="#d4503c"/><stop offset="1" stop-color="#a01c10"/></radialGradient></defs><circle cx="8" cy="8.3" r="7.4" fill="url(#rg)"/><path d="M5 5.3 L11 11.3 M11 5.3 L5 11.3" stroke="#fff" stroke-width="2.5" stroke-linecap="round"/></svg></div><div class="a" style="left:55px;top:0px"><svg width="16" height="15" viewBox="0 0 16 15"><path d="M1 2.2 V9.8 L4.3 13.7 H14.2 V4.2 H12.8" fill="none" stroke="#000" stroke-width="1.7"/><path d="M2.2 2.8 V9.4 L4.7 12.4 H13 V5" fill="none" stroke="#8a0a9a" stroke-width="1"/><path d="M3.2 0.6 C4.3 1.2 5 2.6 5.3 4 V12.6 H9.5 C10.8 12.3 11.6 11.3 11.6 10 V2 H9.8 C9 2.3 8.3 2.8 7.9 3.5 L5.3 4" fill="#fff" stroke="#888" stroke-width="0.6"/><path d="M5.1 4.3 L6.3 4.1 V12.5 H5.1 Z" fill="#000"/><g fill="#f0f000"><circle cx="8.6" cy="7.2" r="0.6"/><circle cx="8.6" cy="9.3" r="0.6"/><circle cx="8.6" cy="11.3" r="0.6"/><circle cx="10.5" cy="6.2" r="0.6"/><circle cx="10.5" cy="8.2" r="0.6"/><circle cx="10.5" cy="10.2" r="0.6"/></g></svg></div></div>
<div class="hbtn" style="left:1251px;top:203px;width:102px"><div class="a" style="left:29px;top:0px"><svg width="16" height="16" viewBox="0 0 16 16"><defs><radialGradient id="rg" cx="50%" cy="10%" r="95%"><stop offset="0" stop-color="#f6d0c0"/><stop offset="0.45" stop-color="#d4503c"/><stop offset="1" stop-color="#a01c10"/></radialGradient></defs><circle cx="8" cy="8.3" r="7.4" fill="url(#rg)"/><path d="M5 5.3 L11 11.3 M11 5.3 L5 11.3" stroke="#fff" stroke-width="2.5" stroke-linecap="round"/></svg></div><div class="a" style="left:55px;top:0px"><svg width="16" height="15" viewBox="0 0 16 15"><path d="M1 2.2 V9.8 L4.3 13.7 H14.2 V4.2 H12.8" fill="none" stroke="#000" stroke-width="1.7"/><path d="M2.2 2.8 V9.4 L4.7 12.4 H13 V5" fill="none" stroke="#8a0a9a" stroke-width="1"/><path d="M3.2 0.6 C4.3 1.2 5 2.6 5.3 4 V12.6 H9.5 C10.8 12.3 11.6 11.3 11.6 10 V2 H9.8 C9 2.3 8.3 2.8 7.9 3.5 L5.3 4" fill="#fff" stroke="#888" stroke-width="0.6"/><path d="M5.1 4.3 L6.3 4.1 V12.5 H5.1 Z" fill="#000"/><g fill="#f0f000"><circle cx="8.6" cy="7.2" r="0.6"/><circle cx="8.6" cy="9.3" r="0.6"/><circle cx="8.6" cy="11.3" r="0.6"/><circle cx="10.5" cy="6.2" r="0.6"/><circle cx="10.5" cy="8.2" r="0.6"/><circle cx="10.5" cy="10.2" r="0.6"/></g></svg></div></div>
<div class="a vl" style="left:1399px;top:172px;width:1px;height:61px"></div>
<div class="a" style="left:1650px;top:173px;width:15px;height:60px;background:#fafafa"></div>
<div class="a" style="left:1653px;top:178px;width:0;height:0;border-left:4.5px solid transparent;border-right:4.5px solid transparent;border-bottom:7px solid #8a8a8a"></div>
<div class="a" style="left:1653px;top:222px;width:0;height:0;border-left:4.5px solid transparent;border-right:4.5px solid transparent;border-top:7px solid #8a8a8a"></div>
<div class="dt" style="left:1459.1px;top:173px">Sat 27 Dec 2025</div>
<div class="a" style="left:1562.4px;top:174px;width:30px;height:20px"><svg width="30" height="20" viewBox="0 0 30 20"><g transform="rotate(6 14.5 9)"><rect x="1.3" y="2.2" width="26.5" height="13.6" rx="1.8" fill="#fff" stroke="#b02828" stroke-width="1.2"/><text x="14.5" y="8.9" font-family="Liberation Sans" font-size="6.6" font-weight="bold" fill="#b02222" text-anchor="middle" textLength="19" lengthAdjust="spacingAndGlyphs">SHOW</text><text x="14.5" y="14" font-family="Liberation Sans" font-size="5" font-weight="bold" fill="#b02222" text-anchor="middle" textLength="22" lengthAdjust="spacingAndGlyphs">CANCELLED</text></g><path d="M29.2 0.5 V19.2 H1" fill="none" stroke="#a0a0a0" stroke-width="1.3"/></svg></div>
<div class="a" style="left:1594.9px;top:176px;width:19px;height:18px"><svg width="19" height="18" viewBox="0 0 19 18"><ellipse cx="3.9" cy="10.9" rx="3.2" ry="3" fill="#e82810"/><ellipse cx="13" cy="8.8" rx="2.6" ry="3.4" fill="#2050b0"/><circle cx="4.8" cy="4.6" r="3.2" fill="#f0a020"/><path d="M1.8 4.2 A3 3 0 0 1 7.8 4.2 Z" fill="#f8e040"/><circle cx="11.3" cy="3.3" r="3.1" fill="#111"/><ellipse cx="8.8" cy="12.8" rx="3.9" ry="3.2" fill="#50c030"/><circle cx="8" cy="7.2" r="3.1" fill="#c8762a"/><path d="M18.2 0.5 V17.2 H0.5" fill="none" stroke="#a0a0a0" stroke-width="1.3"/></svg></div>
<div class="hbtn" style="left:1403px;top:203px;width:102px"><div class="a" style="left:29px;top:0px"><svg width="16" height="16" viewBox="0 0 16 16"><defs><radialGradient id="rg" cx="50%" cy="10%" r="95%"><stop offset="0" stop-color="#f6d0c0"/><stop offset="0.45" stop-color="#d4503c"/><stop offset="1" stop-color="#a01c10"/></radialGradient></defs><circle cx="8" cy="8.3" r="7.4" fill="url(#rg)"/><path d="M5 5.3 L11 11.3 M11 5.3 L5 11.3" stroke="#fff" stroke-width="2.5" stroke-linecap="round"/></svg></div><div class="a" style="left:55px;top:0px"><svg width="16" height="15" viewBox="0 0 16 15"><path d="M1 2.2 V9.8 L4.3 13.7 H14.2 V4.2 H12.8" fill="none" stroke="#000" stroke-width="1.7"/><path d="M2.2 2.8 V9.4 L4.7 12.4 H13 V5" fill="none" stroke="#8a0a9a" stroke-width="1"/><path d="M3.2 0.6 C4.3 1.2 5 2.6 5.3 4 V12.6 H9.5 C10.8 12.3 11.6 11.3 11.6 10 V2 H9.8 C9 2.3 8.3 2.8 7.9 3.5 L5.3 4" fill="#fff" stroke="#888" stroke-width="0.6"/><path d="M5.1 4.3 L6.3 4.1 V12.5 H5.1 Z" fill="#000"/><g fill="#f0f000"><circle cx="8.6" cy="7.2" r="0.6"/><circle cx="8.6" cy="9.3" r="0.6"/><circle cx="8.6" cy="11.3" r="0.6"/><circle cx="10.5" cy="6.2" r="0.6"/><circle cx="10.5" cy="8.2" r="0.6"/><circle cx="10.5" cy="10.2" r="0.6"/></g></svg></div></div>
<div class="hbtn" style="left:1518px;top:203px;width:102px"><div class="a" style="left:29px;top:0px"><svg width="16" height="16" viewBox="0 0 16 16"><defs><radialGradient id="rg" cx="50%" cy="10%" r="95%"><stop offset="0" stop-color="#f6d0c0"/><stop offset="0.45" stop-color="#d4503c"/><stop offset="1" stop-color="#a01c10"/></radialGradient></defs><circle cx="8" cy="8.3" r="7.4" fill="url(#rg)"/><path d="M5 5.3 L11 11.3 M11 5.3 L5 11.3" stroke="#fff" stroke-width="2.5" stroke-linecap="round"/></svg></div><div class="a" style="left:55px;top:0px"><svg width="16" height="15" viewBox="0 0 16 15"><path d="M1 2.2 V9.8 L4.3 13.7 H14.2 V4.2 H12.8" fill="none" stroke="#000" stroke-width="1.7"/><path d="M2.2 2.8 V9.4 L4.7 12.4 H13 V5" fill="none" stroke="#8a0a9a" stroke-width="1"/><path d="M3.2 0.6 C4.3 1.2 5 2.6 5.3 4 V12.6 H9.5 C10.8 12.3 11.6 11.3 11.6 10 V2 H9.8 C9 2.3 8.3 2.8 7.9 3.5 L5.3 4" fill="#fff" stroke="#888" stroke-width="0.6"/><path d="M5.1 4.3 L6.3 4.1 V12.5 H5.1 Z" fill="#000"/><g fill="#f0f000"><circle cx="8.6" cy="7.2" r="0.6"/><circle cx="8.6" cy="9.3" r="0.6"/><circle cx="8.6" cy="11.3" r="0.6"/><circle cx="10.5" cy="6.2" r="0.6"/><circle cx="10.5" cy="8.2" r="0.6"/><circle cx="10.5" cy="10.2" r="0.6"/></g></svg></div></div>
<div class="a vl" style="left:1665px;top:172px;width:1px;height:61px"></div>
<div class="a" style="left:1903px;top:173px;width:15px;height:60px;background:#fafafa"></div>
<div class="a" style="left:1906px;top:178px;width:0;height:0;border-left:4.5px solid transparent;border-right:4.5px solid transparent;border-bottom:7px solid #8a8a8a"></div>
<div class="a" style="left:1906px;top:222px;width:0;height:0;border-left:4.5px solid transparent;border-right:4.5px solid transparent;border-top:7px solid #8a8a8a"></div>
<div class="dt" style="left:1716.5px;top:173px">Sun 28 Dec 2025</div>
<div class="a" style="left:1824.0px;top:174px;width:30px;height:20px"><svg width="30" height="20" viewBox="0 0 30 20"><g transform="rotate(6 14.5 9)"><rect x="1.3" y="2.2" width="26.5" height="13.6" rx="1.8" fill="#fff" stroke="#b02828" stroke-width="1.2"/><text x="14.5" y="8.9" font-family="Liberation Sans" font-size="6.6" font-weight="bold" fill="#b02222" text-anchor="middle" textLength="19" lengthAdjust="spacingAndGlyphs">SHOW</text><text x="14.5" y="14" font-family="Liberation Sans" font-size="5" font-weight="bold" fill="#b02222" text-anchor="middle" textLength="22" lengthAdjust="spacingAndGlyphs">CANCELLED</text></g><path d="M29.2 0.5 V19.2 H1" fill="none" stroke="#a0a0a0" stroke-width="1.3"/></svg></div>
<div class="a" style="left:1856.5px;top:176px;width:19px;height:18px"><svg width="19" height="18" viewBox="0 0 19 18"><ellipse cx="3.9" cy="10.9" rx="3.2" ry="3" fill="#e82810"/><ellipse cx="13" cy="8.8" rx="2.6" ry="3.4" fill="#2050b0"/><circle cx="4.8" cy="4.6" r="3.2" fill="#f0a020"/><path d="M1.8 4.2 A3 3 0 0 1 7.8 4.2 Z" fill="#f8e040"/><circle cx="11.3" cy="3.3" r="3.1" fill="#111"/><ellipse cx="8.8" cy="12.8" rx="3.9" ry="3.2" fill="#50c030"/><circle cx="8" cy="7.2" r="3.1" fill="#c8762a"/><path d="M18.2 0.5 V17.2 H0.5" fill="none" stroke="#a0a0a0" stroke-width="1.3"/></svg></div>
<div class="hbtn" style="left:1669px;top:203px;width:97px"><div class="a" style="left:26px;top:0px"><svg width="16" height="16" viewBox="0 0 16 16"><defs><radialGradient id="rg" cx="50%" cy="10%" r="95%"><stop offset="0" stop-color="#f6d0c0"/><stop offset="0.45" stop-color="#d4503c"/><stop offset="1" stop-color="#a01c10"/></radialGradient></defs><circle cx="8" cy="8.3" r="7.4" fill="url(#rg)"/><path d="M5 5.3 L11 11.3 M11 5.3 L5 11.3" stroke="#fff" stroke-width="2.5" stroke-linecap="round"/></svg></div><div class="a" style="left:52px;top:0px"><svg width="16" height="15" viewBox="0 0 16 15"><path d="M1 2.2 V9.8 L4.3 13.7 H14.2 V4.2 H12.8" fill="none" stroke="#000" stroke-width="1.7"/><path d="M2.2 2.8 V9.4 L4.7 12.4 H13 V5" fill="none" stroke="#8a0a9a" stroke-width="1"/><path d="M3.2 0.6 C4.3 1.2 5 2.6 5.3 4 V12.6 H9.5 C10.8 12.3 11.6 11.3 11.6 10 V2 H9.8 C9 2.3 8.3 2.8 7.9 3.5 L5.3 4" fill="#fff" stroke="#888" stroke-width="0.6"/><path d="M5.1 4.3 L6.3 4.1 V12.5 H5.1 Z" fill="#000"/><g fill="#f0f000"><circle cx="8.6" cy="7.2" r="0.6"/><circle cx="8.6" cy="9.3" r="0.6"/><circle cx="8.6" cy="11.3" r="0.6"/><circle cx="10.5" cy="6.2" r="0.6"/><circle cx="10.5" cy="8.2" r="0.6"/><circle cx="10.5" cy="10.2" r="0.6"/></g></svg></div></div>
<div class="hbtn" style="left:1779px;top:203px;width:97px"><div class="a" style="left:26px;top:0px"><svg width="16" height="16" viewBox="0 0 16 16"><defs><radialGradient id="rg" cx="50%" cy="10%" r="95%"><stop offset="0" stop-color="#f6d0c0"/><stop offset="0.45" stop-color="#d4503c"/><stop offset="1" stop-color="#a01c10"/></radialGradient></defs><circle cx="8" cy="8.3" r="7.4" fill="url(#rg)"/><path d="M5 5.3 L11 11.3 M11 5.3 L5 11.3" stroke="#fff" stroke-width="2.5" stroke-linecap="round"/></svg></div><div class="a" style="left:52px;top:0px"><svg width="16" height="15" viewBox="0 0 16 15"><path d="M1 2.2 V9.8 L4.3 13.7 H14.2 V4.2 H12.8" fill="none" stroke="#000" stroke-width="1.7"/><path d="M2.2 2.8 V9.4 L4.7 12.4 H13 V5" fill="none" stroke="#8a0a9a" stroke-width="1"/><path d="M3.2 0.6 C4.3 1.2 5 2.6 5.3 4 V12.6 H9.5 C10.8 12.3 11.6 11.3 11.6 10 V2 H9.8 C9 2.3 8.3 2.8 7.9 3.5 L5.3 4" fill="#fff" stroke="#888" stroke-width="0.6"/><path d="M5.1 4.3 L6.3 4.1 V12.5 H5.1 Z" fill="#000"/><g fill="#f0f000"><circle cx="8.6" cy="7.2" r="0.6"/><circle cx="8.6" cy="9.3" r="0.6"/><circle cx="8.6" cy="11.3" r="0.6"/><circle cx="10.5" cy="6.2" r="0.6"/><circle cx="10.5" cy="8.2" r="0.6"/><circle cx="10.5" cy="10.2" r="0.6"/></g></svg></div></div>
<div class="a" style="left:867px;top:238px;width:265px;height:363px;background:#fffdcc"></div>
<div class="a" style="left:1px;top:261px;width:1917px;height:1px;background:#d0d0d0"></div>
<div class="a" style="left:1px;top:285px;width:1917px;height:1px;background-image:linear-gradient(90deg,#bcbcbc 50%,transparent 50%);background-size:2px 1px;background-position:1px 0"></div>
<div class="a" style="left:1px;top:310px;width:1917px;height:1px;background:#d0d0d0"></div>
<div class="a" style="left:1px;top:334px;width:1917px;height:1px;background-image:linear-gradient(90deg,#bcbcbc 50%,transparent 50%);background-size:2px 1px;background-position:1px 0"></div>
<div class="a" style="left:1px;top:358px;width:1917px;height:1px;background:#d0d0d0"></div>
<div class="a" style="left:1px;top:382px;width:1917px;height:1px;background-image:linear-gradient(90deg,#bcbcbc 50%,transparent 50%);background-size:2px 1px;background-position:1px 0"></div>
<div class="a" style="left:1px;top:407px;width:1917px;height:1px;background:#d0d0d0"></div>
<div class="a" style="left:1px;top:431px;width:1917px;height:1px;background-image:linear-gradient(90deg,#bcbcbc 50%,transparent 50%);background-size:2px 1px;background-position:1px 0"></div>
<div class="a" style="left:1px;top:455px;width:1917px;height:1px;background:#d0d0d0"></div>
<div class="a" style="left:1px;top:479px;width:1917px;height:1px;background-image:linear-gradient(90deg,#bcbcbc 50%,transparent 50%);background-size:2px 1px;background-position:1px 0"></div>
<div class="a" style="left:1px;top:504px;width:1917px;height:1px;background:#d0d0d0"></div>
<div class="a" style="left:1px;top:528px;width:1917px;height:1px;background-image:linear-gradient(90deg,#bcbcbc 50%,transparent 50%);background-size:2px 1px;background-position:1px 0"></div>
<div class="a" style="left:1px;top:552px;width:1917px;height:1px;background:#d0d0d0"></div>
<div class="a" style="left:1px;top:576px;width:1917px;height:1px;background-image:linear-gradient(90deg,#bcbcbc 50%,transparent 50%);background-size:2px 1px;background-position:1px 0"></div>
<div class="a" style="left:1px;top:601px;width:1917px;height:1px;background:#d4d4d4"></div>
<div class="a" style="left:64px;top:238px;width:2px;height:363px;background:#cfcfcf"></div>
<div class="a" style="left:332px;top:238px;width:1px;height:363px;background:#d4d4d4"></div>
<div class="a" style="left:599px;top:238px;width:1px;height:363px;background:#d4d4d4"></div>
<div class="a" style="left:866px;top:238px;width:1px;height:363px;background:#d4d4d4"></div>
<div class="a" style="left:1132px;top:238px;width:1px;height:363px;background:#d4d4d4"></div>
<div class="a" style="left:1399px;top:238px;width:1px;height:363px;background:#d4d4d4"></div>
<div class="a" style="left:1665px;top:238px;width:1px;height:363px;background:#d4d4d4"></div>
<div class="tl" style="top:266px;line-height:15px;left:4.5px">10am</div>
<div class="tl" style="top:315px;line-height:15px;left:4.5px">11am</div>
<div class="tl" style="top:363px;line-height:15px;left:4.5px">12pm</div>
<div class="tl" style="top:412px;line-height:15px;left:4.5px">1pm</div>
<div class="tl" style="top:460px;line-height:15px;left:4.5px">2pm</div>
<div class="tl" style="top:509px;line-height:15px;left:4.5px">3pm</div>
<div class="tl" style="top:557px;line-height:15px;left:4.5px">4pm</div>
<div class="ev fc" style="left:71px;top:239px;width:101px">F (47)<span class="smi"><svg width="13" height="13" viewBox="0 0 13 13"><defs><radialGradient id="sg" cx="40%" cy="35%" r="70%"><stop offset="0" stop-color="#ffff90"/><stop offset="0.5" stop-color="#f8f400"/><stop offset="1" stop-color="#e0d400"/></radialGradient></defs><circle cx="6.5" cy="6.5" r="6.4" fill="url(#sg)"/><ellipse cx="4.3" cy="4.2" rx="0.85" ry="1.25" fill="#2a2a10"/><ellipse cx="8.6" cy="4.2" rx="0.85" ry="1.25" fill="#2a2a10"/><path d="M2.3 7.4 Q6.5 12.8 10.7 7.4" fill="none" stroke="#6a6400" stroke-width="1.1"/></svg></span></div>
<div class="ev ns2" style="left:71px;top:262px;width:101px">F (58)<span class="gd"></span></div>
<div class="ev ns2" style="left:71px;top:287px;width:101px">F (15)</div>
<div class="ev fc" style="left:71px;top:311px;width:101px">F (42)<span class="smi"><svg width="13" height="13" viewBox="0 0 13 13"><defs><radialGradient id="sg" cx="40%" cy="35%" r="70%"><stop offset="0" stop-color="#ffff90"/><stop offset="0.5" stop-color="#f8f400"/><stop offset="1" stop-color="#e0d400"/></radialGradient></defs><circle cx="6.5" cy="6.5" r="6.4" fill="url(#sg)"/><ellipse cx="4.3" cy="4.2" rx="0.85" ry="1.25" fill="#2a2a10"/><ellipse cx="8.6" cy="4.2" rx="0.85" ry="1.25" fill="#2a2a10"/><path d="M2.3 7.4 Q6.5 12.8 10.7 7.4" fill="none" stroke="#6a6400" stroke-width="1.1"/></svg></span></div>
<div class="ev em" style="left:71px;top:335px;width:101px">11:30</div>
<div class="ev ns2" style="left:71px;top:360px;width:101px">F (23)</div>
<div class="ev fc" style="left:71px;top:384px;width:101px">M (47)<span class="smi"><svg width="13" height="13" viewBox="0 0 13 13"><defs><radialGradient id="sg" cx="40%" cy="35%" r="70%"><stop offset="0" stop-color="#ffff90"/><stop offset="0.5" stop-color="#f8f400"/><stop offset="1" stop-color="#e0d400"/></radialGradient></defs><circle cx="6.5" cy="6.5" r="6.4" fill="url(#sg)"/><ellipse cx="4.3" cy="4.2" rx="0.85" ry="1.25" fill="#2a2a10"/><ellipse cx="8.6" cy="4.2" rx="0.85" ry="1.25" fill="#2a2a10"/><path d="M2.3 7.4 Q6.5 12.8 10.7 7.4" fill="none" stroke="#6a6400" stroke-width="1.1"/></svg></span></div>
<div class="ev ns2" style="left:71px;top:408px;width:101px">M (58)</div>
<div class="ev fc" style="left:71px;top:432px;width:101px">M (42)<span class="smi"><svg width="13" height="13" viewBox="0 0 13 13"><circle cx="6.5" cy="6.5" r="6.4" fill="url(#sg)"/><ellipse cx="4.3" cy="4.2" rx="0.85" ry="1.25" fill="#2a2a10"/><ellipse cx="8.6" cy="4.2" rx="0.85" ry="1.25" fill="#2a2a10"/><path d="M3.6 6 L6.5 12.2 L9.4 6" fill="none" stroke="#e83a10" stroke-width="1.9" stroke-linejoin="round"/></svg></span></div>
<div class="ev fc" style="left:71px;top:456px;width:101px">M (24)<span class="smi"><svg width="13" height="13" viewBox="0 0 13 13"><defs><radialGradient id="sg" cx="40%" cy="35%" r="70%"><stop offset="0" stop-color="#ffff90"/><stop offset="0.5" stop-color="#f8f400"/><stop offset="1" stop-color="#e0d400"/></radialGradient></defs><circle cx="6.5" cy="6.5" r="6.4" fill="url(#sg)"/><ellipse cx="4.3" cy="4.2" rx="0.85" ry="1.25" fill="#2a2a10"/><ellipse cx="8.6" cy="4.2" rx="0.85" ry="1.25" fill="#2a2a10"/><path d="M2.3 7.4 Q6.5 12.8 10.7 7.4" fill="none" stroke="#6a6400" stroke-width="1.1"/></svg></span></div>
<div class="ev fc" style="left:71px;top:481px;width:101px">F (32)<span class="smi"><svg width="13" height="13" viewBox="0 0 13 13"><circle cx="6.5" cy="6.5" r="6.4" fill="url(#sg)"/><ellipse cx="4.3" cy="4.2" rx="0.85" ry="1.25" fill="#2a2a10"/><ellipse cx="8.6" cy="4.2" rx="0.85" ry="1.25" fill="#2a2a10"/><path d="M3.6 6 L6.5 12.2 L9.4 6" fill="none" stroke="#e83a10" stroke-width="1.9" stroke-linejoin="round"/></svg></span></div>
<div class="ev ns2" style="left:71px;top:505px;width:101px">F (18)</div>
<div class="ev ns2" style="left:71px;top:529px;width:101px">M (37)</div>
<div class="ev fc" style="left:71px;top:553px;width:101px">F (26)<span class="smi"><svg width="13" height="13" viewBox="0 0 13 13"><defs><radialGradient id="sg" cx="40%" cy="35%" r="70%"><stop offset="0" stop-color="#ffff90"/><stop offset="0.5" stop-color="#f8f400"/><stop offset="1" stop-color="#e0d400"/></radialGradient></defs><circle cx="6.5" cy="6.5" r="6.4" fill="url(#sg)"/><ellipse cx="4.3" cy="4.2" rx="0.85" ry="1.25" fill="#2a2a10"/><ellipse cx="8.6" cy="4.2" rx="0.85" ry="1.25" fill="#2a2a10"/><path d="M2.3 7.4 Q6.5 12.8 10.7 7.4" fill="none" stroke="#6a6400" stroke-width="1.1"/></svg></span></div>
<div class="ev bk" style="left:71px;top:578px;width:101px"></div>
<div class="ev fc" style="left:185px;top:239px;width:102px">M (38)<span class="smi"><svg width="13" height="13" viewBox="0 0 13 13"><defs><radialGradient id="sg" cx="40%" cy="35%" r="70%"><stop offset="0" stop-color="#ffff90"/><stop offset="0.5" stop-color="#f8f400"/><stop offset="1" stop-color="#e0d400"/></radialGradient></defs><circle cx="6.5" cy="6.5" r="6.4" fill="url(#sg)"/><ellipse cx="4.3" cy="4.2" rx="0.85" ry="1.25" fill="#2a2a10"/><ellipse cx="8.6" cy="4.2" rx="0.85" ry="1.25" fill="#2a2a10"/><path d="M2.3 7.4 Q6.5 12.8 10.7 7.4" fill="none" stroke="#6a6400" stroke-width="1.1"/></svg></span></div>
<div class="ev bk" style="left:185px;top:262px;width:102px"></div>
<div class="ev bk" style="left:185px;top:287px;width:102px"></div>
<div class="ev bk" style="left:185px;top:311px;width:102px"></div>
<div class="ev bk" style="left:185px;top:335px;width:102px"></div>
<div class="ev bk" style="left:185px;top:360px;width:102px"></div>
<div class="ev bk" style="left:185px;top:384px;width:102px"></div>
<div class="ev bk" style="left:185px;top:408px;width:102px"></div>
<div class="ev bk" style="left:185px;top:432px;width:102px"></div>
<div class="ev bk" style="left:185px;top:456px;width:102px"></div>
<div class="ev bk" style="left:185px;top:481px;width:102px"></div>
<div class="ev bk" style="left:185px;top:505px;width:102px"></div>
<div class="ev bk" style="left:185px;top:529px;width:102px"></div>
<div class="ev bk" style="left:185px;top:553px;width:102px"></div>
<div class="ev bk" style="left:185px;top:578px;width:102px"></div>
<div class="ev hc" style="left:338px;top:239px;width:101px">M (21)<span class="smi"><svg width="13" height="13" viewBox="0 0 13 13"><defs><radialGradient id="sg" cx="40%" cy="35%" r="70%"><stop offset="0" stop-color="#ffff90"/><stop offset="0.5" stop-color="#f8f400"/><stop offset="1" stop-color="#e0d400"/></radialGradient></defs><circle cx="6.5" cy="6.5" r="6.4" fill="url(#sg)"/><ellipse cx="4.3" cy="4.2" rx="0.85" ry="1.25" fill="#2a2a10"/><ellipse cx="8.6" cy="4.2" rx="0.85" ry="1.25" fill="#2a2a10"/><path d="M2.3 7.4 Q6.5 12.8 10.7 7.4" fill="none" stroke="#6a6400" stroke-width="1.1"/></svg></span></div>
<div class="ev em" style="left:338px;top:262px;width:101px">10:00</div>
<div class="ev fc" style="left:338px;top:287px;width:101px">M (24)<span class="smi"><svg width="13" height="13" viewBox="0 0 13 13"><defs><radialGradient id="sg" cx="40%" cy="35%" r="70%"><stop offset="0" stop-color="#ffff90"/><stop offset="0.5" stop-color="#f8f400"/><stop offset="1" stop-color="#e0d400"/></radialGradient></defs><circle cx="6.5" cy="6.5" r="6.4" fill="url(#sg)"/><ellipse cx="4.3" cy="4.2" rx="0.85" ry="1.25" fill="#2a2a10"/><ellipse cx="8.6" cy="4.2" rx="0.85" ry="1.25" fill="#2a2a10"/><path d="M2.3 7.4 Q6.5 12.8 10.7 7.4" fill="none" stroke="#6a6400" stroke-width="1.1"/></svg></span></div>
<div class="ev fc" style="left:338px;top:311px;width:101px">M (41)<span class="smi"><svg width="13" height="13" viewBox="0 0 13 13"><defs><radialGradient id="sg" cx="40%" cy="35%" r="70%"><stop offset="0" stop-color="#ffff90"/><stop offset="0.5" stop-color="#f8f400"/><stop offset="1" stop-color="#e0d400"/></radialGradient></defs><circle cx="6.5" cy="6.5" r="6.4" fill="url(#sg)"/><ellipse cx="4.3" cy="4.2" rx="0.85" ry="1.25" fill="#2a2a10"/><ellipse cx="8.6" cy="4.2" rx="0.85" ry="1.25" fill="#2a2a10"/><path d="M2.3 7.4 Q6.5 12.8 10.7 7.4" fill="none" stroke="#6a6400" stroke-width="1.1"/></svg></span></div>
<div class="ev fc" style="left:338px;top:335px;width:101px">F (37)<span class="smi"><svg width="13" height="13" viewBox="0 0 13 13"><defs><radialGradient id="sg" cx="40%" cy="35%" r="70%"><stop offset="0" stop-color="#ffff90"/><stop offset="0.5" stop-color="#f8f400"/><stop offset="1" stop-color="#e0d400"/></radialGradient></defs><circle cx="6.5" cy="6.5" r="6.4" fill="url(#sg)"/><ellipse cx="4.3" cy="4.2" rx="0.85" ry="1.25" fill="#2a2a10"/><ellipse cx="8.6" cy="4.2" rx="0.85" ry="1.25" fill="#2a2a10"/><path d="M2.3 7.4 Q6.5 12.8 10.7 7.4" fill="none" stroke="#6a6400" stroke-width="1.1"/></svg></span></div>
<div class="ev hc" style="left:338px;top:360px;width:101px">F (52)<span class="smi"><svg width="13" height="13" viewBox="0 0 13 13"><defs><radialGradient id="sg" cx="40%" cy="35%" r="70%"><stop offset="0" stop-color="#ffff90"/><stop offset="0.5" stop-color="#f8f400"/><stop offset="1" stop-color="#e0d400"/></radialGradient></defs><circle cx="6.5" cy="6.5" r="6.4" fill="url(#sg)"/><ellipse cx="4.3" cy="4.2" rx="0.85" ry="1.25" fill="#2a2a10"/><ellipse cx="8.6" cy="4.2" rx="0.85" ry="1.25" fill="#2a2a10"/><path d="M2.3 7.4 Q6.5 12.8 10.7 7.4" fill="none" stroke="#6a6400" stroke-width="1.1"/></svg></span></div>
<div class="ev ns2" style="left:338px;top:384px;width:101px">M (31)</div>
<div class="ev em" style="left:338px;top:408px;width:101px">13:00</div>
<div class="ev fc" style="left:338px;top:432px;width:101px">F (23)<span class="smi"><svg width="13" height="13" viewBox="0 0 13 13"><defs><radialGradient id="sg" cx="40%" cy="35%" r="70%"><stop offset="0" stop-color="#ffff90"/><stop offset="0.5" stop-color="#f8f400"/><stop offset="1" stop-color="#e0d400"/></radialGradient></defs><circle cx="6.5" cy="6.5" r="6.4" fill="url(#sg)"/><ellipse cx="4.3" cy="4.2" rx="0.85" ry="1.25" fill="#2a2a10"/><ellipse cx="8.6" cy="4.2" rx="0.85" ry="1.25" fill="#2a2a10"/><path d="M2.3 7.4 Q6.5 12.8 10.7 7.4" fill="none" stroke="#6a6400" stroke-width="1.1"/></svg></span></div>
<div class="ev fc" style="left:338px;top:456px;width:101px">F (23)<span class="smi"><svg width="13" height="13" viewBox="0 0 13 13"><defs><radialGradient id="sg" cx="40%" cy="35%" r="70%"><stop offset="0" stop-color="#ffff90"/><stop offset="0.5" stop-color="#f8f400"/><stop offset="1" stop-color="#e0d400"/></radialGradient></defs><circle cx="6.5" cy="6.5" r="6.4" fill="url(#sg)"/><ellipse cx="4.3" cy="4.2" rx="0.85" ry="1.25" fill="#2a2a10"/><ellipse cx="8.6" cy="4.2" rx="0.85" ry="1.25" fill="#2a2a10"/><path d="M2.3 7.4 Q6.5 12.8 10.7 7.4" fill="none" stroke="#6a6400" stroke-width="1.1"/></svg></span></div>
<div class="ev em" style="left:338px;top:481px;width:101px">14:30</div>
<div class="ev em" style="left:338px;top:505px;width:101px">15:00</div>
<div class="ev fc" style="left:338px;top:529px;width:101px">M (29)<span class="smi"><svg width="13" height="13" viewBox="0 0 13 13"><defs><radialGradient id="sg" cx="40%" cy="35%" r="70%"><stop offset="0" stop-color="#ffff90"/><stop offset="0.5" stop-color="#f8f400"/><stop offset="1" stop-color="#e0d400"/></radialGradient></defs><circle cx="6.5" cy="6.5" r="6.4" fill="url(#sg)"/><ellipse cx="4.3" cy="4.2" rx="0.85" ry="1.25" fill="#2a2a10"/><ellipse cx="8.6" cy="4.2" rx="0.85" ry="1.25" fill="#2a2a10"/><path d="M2.3 7.4 Q6.5 12.8 10.7 7.4" fill="none" stroke="#6a6400" stroke-width="1.1"/></svg></span></div>
<div class="ev em" style="left:338px;top:553px;width:101px">16:00</div>
<div class="ev bk" style="left:338px;top:578px;width:101px"></div>
<div class="ev fc" style="left:452px;top:239px;width:102px">M (25)<span class="smi"><svg width="13" height="13" viewBox="0 0 13 13"><defs><radialGradient id="sg" cx="40%" cy="35%" r="70%"><stop offset="0" stop-color="#ffff90"/><stop offset="0.5" stop-color="#f8f400"/><stop offset="1" stop-color="#e0d400"/></radialGradient></defs><circle cx="6.5" cy="6.5" r="6.4" fill="url(#sg)"/><ellipse cx="4.3" cy="4.2" rx="0.85" ry="1.25" fill="#2a2a10"/><ellipse cx="8.6" cy="4.2" rx="0.85" ry="1.25" fill="#2a2a10"/><path d="M2.3 7.4 Q6.5 12.8 10.7 7.4" fill="none" stroke="#6a6400" stroke-width="1.1"/></svg></span></div>
<div class="ev bk" style="left:452px;top:262px;width:102px"></div>
<div class="ev bk" style="left:452px;top:287px;width:102px"></div>
<div class="ev bk" style="left:452px;top:311px;width:102px"></div>
<div class="ev bk" style="left:452px;top:335px;width:102px"></div>
<div class="ev bk" style="left:452px;top:360px;width:102px"></div>
<div class="ev bk" style="left:452px;top:384px;width:102px"></div>
<div class="ev bk" style="left:452px;top:408px;width:102px"></div>
<div class="ev bk" style="left:452px;top:432px;width:102px"></div>
<div class="ev bk" style="left:452px;top:456px;width:102px"></div>
<div class="ev bk" style="left:452px;top:481px;width:102px"></div>
<div class="ev bk" style="left:452px;top:505px;width:102px"></div>
<div class="ev bk" style="left:452px;top:529px;width:102px"></div>
<div class="ev bk" style="left:452px;top:553px;width:102px"></div>
<div class="ev bk" style="left:452px;top:578px;width:102px"></div>
<div class="ev fc" style="left:605px;top:239px;width:101px">M (24)<span class="smi"><svg width="13" height="13" viewBox="0 0 13 13"><defs><radialGradient id="sg" cx="40%" cy="35%" r="70%"><stop offset="0" stop-color="#ffff90"/><stop offset="0.5" stop-color="#f8f400"/><stop offset="1" stop-color="#e0d400"/></radialGradient></defs><circle cx="6.5" cy="6.5" r="6.4" fill="url(#sg)"/><ellipse cx="4.3" cy="4.2" rx="0.85" ry="1.25" fill="#2a2a10"/><ellipse cx="8.6" cy="4.2" rx="0.85" ry="1.25" fill="#2a2a10"/><path d="M2.3 7.4 Q6.5 12.8 10.7 7.4" fill="none" stroke="#6a6400" stroke-width="1.1"/></svg></span></div>
<div class="ev fc" style="left:605px;top:262px;width:101px">F (46)<span class="smi"><svg width="13" height="13" viewBox="0 0 13 13"><defs><radialGradient id="sg" cx="40%" cy="35%" r="70%"><stop offset="0" stop-color="#ffff90"/><stop offset="0.5" stop-color="#f8f400"/><stop offset="1" stop-color="#e0d400"/></radialGradient></defs><circle cx="6.5" cy="6.5" r="6.4" fill="url(#sg)"/><ellipse cx="4.3" cy="4.2" rx="0.85" ry="1.25" fill="#2a2a10"/><ellipse cx="8.6" cy="4.2" rx="0.85" ry="1.25" fill="#2a2a10"/><path d="M2.3 7.4 Q6.5 12.8 10.7 7.4" fill="none" stroke="#6a6400" stroke-width="1.1"/></svg></span></div>
<div class="ev ns2" style="left:605px;top:287px;width:101px">F (35)<span class="gd"></span></div>
<div class="ev em" style="left:605px;top:311px;width:101px">11:00</div>
<div class="ev em" style="left:605px;top:335px;width:101px">11:30</div>
<div class="ev em" style="left:605px;top:360px;width:101px">12:00</div>
<div class="ev fc" style="left:605px;top:384px;width:101px">M (28) R</div>
<div class="ev fc" style="left:605px;top:408px;width:101px">F (50)<span class="smi"><svg width="13" height="13" viewBox="0 0 13 13"><defs><radialGradient id="sg" cx="40%" cy="35%" r="70%"><stop offset="0" stop-color="#ffff90"/><stop offset="0.5" stop-color="#f8f400"/><stop offset="1" stop-color="#e0d400"/></radialGradient></defs><circle cx="6.5" cy="6.5" r="6.4" fill="url(#sg)"/><ellipse cx="4.3" cy="4.2" rx="0.85" ry="1.25" fill="#2a2a10"/><ellipse cx="8.6" cy="4.2" rx="0.85" ry="1.25" fill="#2a2a10"/><path d="M2.3 7.4 Q6.5 12.8 10.7 7.4" fill="none" stroke="#6a6400" stroke-width="1.1"/></svg></span></div>
<div class="ev em" style="left:605px;top:432px;width:101px">13:30</div>
<div class="ev ns2" style="left:605px;top:456px;width:101px">F (32)</div>
<div class="ev fc" style="left:605px;top:481px;width:101px">M (19)<span class="smi"><svg width="13" height="13" viewBox="0 0 13 13"><defs><radialGradient id="sg" cx="40%" cy="35%" r="70%"><stop offset="0" stop-color="#ffff90"/><stop offset="0.5" stop-color="#f8f400"/><stop offset="1" stop-color="#e0d400"/></radialGradient></defs><circle cx="6.5" cy="6.5" r="6.4" fill="url(#sg)"/><ellipse cx="4.3" cy="4.2" rx="0.85" ry="1.25" fill="#2a2a10"/><ellipse cx="8.6" cy="4.2" rx="0.85" ry="1.25" fill="#2a2a10"/><path d="M2.3 7.4 Q6.5 12.8 10.7 7.4" fill="none" stroke="#6a6400" stroke-width="1.1"/></svg></span></div>
<div class="ev fc" style="left:605px;top:505px;width:101px">F (24)<span class="smi"><svg width="13" height="13" viewBox="0 0 13 13"><defs><radialGradient id="sg" cx="40%" cy="35%" r="70%"><stop offset="0" stop-color="#ffff90"/><stop offset="0.5" stop-color="#f8f400"/><stop offset="1" stop-color="#e0d400"/></radialGradient></defs><circle cx="6.5" cy="6.5" r="6.4" fill="url(#sg)"/><ellipse cx="4.3" cy="4.2" rx="0.85" ry="1.25" fill="#2a2a10"/><ellipse cx="8.6" cy="4.2" rx="0.85" ry="1.25" fill="#2a2a10"/><path d="M2.3 7.4 Q6.5 12.8 10.7 7.4" fill="none" stroke="#6a6400" stroke-width="1.1"/></svg></span></div>
<div class="ev bk" style="left:605px;top:529px;width:101px"></div>
<div class="ev bk" style="left:605px;top:553px;width:101px"></div>
<div class="ev bk" style="left:605px;top:578px;width:101px"></div>
<div class="ev fc" style="left:719px;top:239px;width:102px">F (31)<span class="smi"><svg width="13" height="13" viewBox="0 0 13 13"><defs><radialGradient id="sg" cx="40%" cy="35%" r="70%"><stop offset="0" stop-color="#ffff90"/><stop offset="0.5" stop-color="#f8f400"/><stop offset="1" stop-color="#e0d400"/></radialGradient></defs><circle cx="6.5" cy="6.5" r="6.4" fill="url(#sg)"/><ellipse cx="4.3" cy="4.2" rx="0.85" ry="1.25" fill="#2a2a10"/><ellipse cx="8.6" cy="4.2" rx="0.85" ry="1.25" fill="#2a2a10"/><path d="M2.3 7.4 Q6.5 12.8 10.7 7.4" fill="none" stroke="#6a6400" stroke-width="1.1"/></svg></span></div>
<div class="ev bk" style="left:719px;top:262px;width:102px"></div>
<div class="ev bk" style="left:719px;top:287px;width:102px"></div>
<div class="ev rv" style="left:719px;top:311px;width:102px">M (23)</div>
<div class="ev bk" style="left:719px;top:335px;width:102px"></div>
<div class="ev bk" style="left:719px;top:360px;width:102px"></div>
<div class="ev bk" style="left:719px;top:384px;width:102px"></div>
<div class="ev bk" style="left:719px;top:408px;width:102px"></div>
<div class="ev bk" style="left:719px;top:432px;width:102px"></div>
<div class="ev bk" style="left:719px;top:456px;width:102px"></div>
<div class="ev bk" style="left:719px;top:481px;width:102px"></div>
<div class="ev bk" style="left:719px;top:505px;width:102px"></div>
<div class="ev bk" style="left:719px;top:529px;width:102px"></div>
<div class="ev bk" style="left:719px;top:553px;width:102px"></div>
<div class="ev bk" style="left:719px;top:578px;width:102px"></div>
<div class="ev bk" style="left:872px;top:239px;width:101px"></div>
<div class="ev bk" style="left:872px;top:262px;width:101px"></div>
<div class="ev bk" style="left:872px;top:287px;width:101px"></div>
<div class="ev bk" style="left:872px;top:311px;width:101px"></div>
<div class="ev bk" style="left:872px;top:335px;width:101px"></div>
<div class="ev bk" style="left:872px;top:360px;width:101px"></div>
<div class="ev bk" style="left:872px;top:384px;width:101px"></div>
<div class="ev bk" style="left:872px;top:408px;width:101px"></div>
<div class="ev bk" style="left:872px;top:432px;width:101px"></div>
<div class="ev bk" style="left:872px;top:456px;width:101px"></div>
<div class="ev bk" style="left:872px;top:481px;width:101px"></div>
<div class="ev bk" style="left:872px;top:505px;width:101px"></div>
<div class="ev bk" style="left:872px;top:529px;width:101px"></div>
<div class="ev bk" style="left:872px;top:553px;width:101px"></div>
<div class="ev bk" style="left:872px;top:578px;width:101px"></div>
<div class="ev bk" style="left:986px;top:239px;width:102px"></div>
<div class="ev bk" style="left:986px;top:262px;width:102px"></div>
<div class="ev bk" style="left:986px;top:287px;width:102px"></div>
<div class="ev bk" style="left:986px;top:311px;width:102px"></div>
<div class="ev bk" style="left:986px;top:335px;width:102px"></div>
<div class="ev bk" style="left:986px;top:360px;width:102px"></div>
<div class="ev bk" style="left:986px;top:384px;width:102px"></div>
<div class="ev bk" style="left:986px;top:408px;width:102px"></div>
<div class="ev bk" style="left:986px;top:432px;width:102px"></div>
<div class="ev bk" style="left:986px;top:456px;width:102px"></div>
<div class="ev bk" style="left:986px;top:481px;width:102px"></div>
<div class="ev bk" style="left:986px;top:505px;width:102px"></div>
<div class="ev bk" style="left:986px;top:529px;width:102px"></div>
<div class="ev bk" style="left:986px;top:553px;width:102px"></div>
<div class="ev bk" style="left:986px;top:578px;width:102px"></div>
<div class="ev fc" style="left:1138px;top:239px;width:101px">F (56)</div>
<div class="ev hc" style="left:1138px;top:262px;width:101px">M (45)</div>
<div class="ev fc" style="left:1138px;top:287px;width:101px">M (22)</div>
<div class="ev fc" style="left:1138px;top:311px;width:101px">M (45)</div>
<div class="ev fc" style="left:1138px;top:335px;width:101px">M (56)</div>
<div class="ev hc" style="left:1138px;top:360px;width:101px">M (47)</div>
<div class="ev hc" style="left:1138px;top:384px;width:101px">M (22)</div>
<div class="ev fc" style="left:1138px;top:408px;width:101px">F (52)</div>
<div class="ev fc" style="left:1138px;top:432px;width:101px">M (26)</div>
<div class="ev fc" style="left:1138px;top:456px;width:101px">F (32)</div>
<div class="ev hc" style="left:1138px;top:481px;width:101px">F (47)</div>
<div class="ev ac" style="left:1138px;top:505px;width:101px">F (60)<span class="bd"></span></div>
<div class="ev fc" style="left:1138px;top:529px;width:101px">M (37)</div>
<div class="ev fc" style="left:1138px;top:553px;width:101px">M (47)</div>
<div class="ev bk" style="left:1138px;top:578px;width:101px"></div>
<div class="ev em" style="left:1252px;top:239px;width:102px">09:30</div>
<div class="ev bk" style="left:1252px;top:262px;width:102px"></div>
<div class="ev bk" style="left:1252px;top:287px;width:102px"></div>
<div class="ev hc" style="left:1252px;top:311px;width:102px">F (51)</div>
<div class="ev bk" style="left:1252px;top:335px;width:102px"></div>
<div class="ev bk" style="left:1252px;top:360px;width:102px"></div>
<div class="ev bk" style="left:1252px;top:384px;width:102px"></div>
<div class="ev bk" style="left:1252px;top:408px;width:102px"></div>
<div class="ev bk" style="left:1252px;top:432px;width:102px"></div>
<div class="ev bk" style="left:1252px;top:456px;width:102px"></div>
<div class="ev bk" style="left:1252px;top:481px;width:102px"></div>
<div class="ev bk" style="left:1252px;top:505px;width:102px"></div>
<div class="ev bk" style="left:1252px;top:529px;width:102px"></div>
<div class="ev bk" style="left:1252px;top:553px;width:102px"></div>
<div class="ev bk" style="left:1252px;top:578px;width:102px"></div>
<div class="ev fc" style="left:1405px;top:239px;width:101px">F (60)</div>
<div class="ev ac" style="left:1405px;top:262px;width:101px">M (21)</div>
<div class="ev fc" style="left:1405px;top:287px;width:101px">M (22)</div>
<div class="ev fc" style="left:1405px;top:311px;width:101px">M (46)</div>
<div class="ev fc" style="left:1405px;top:335px;width:101px">M (70)</div>
<div class="ev fc" style="left:1405px;top:360px;width:101px">F (17)</div>
<div class="ev fc" style="left:1405px;top:384px;width:101px">F (23)</div>
<div class="ev fc" style="left:1405px;top:408px;width:101px">F (52)</div>
<div class="ev fc" style="left:1405px;top:432px;width:101px">M (14)</div>
<div class="ev ns2" style="left:1405px;top:456px;width:101px">M (20)<span class="rb">1</span></div>
<div class="ev fc" style="left:1405px;top:481px;width:101px">M (42)</div>
<div class="ev ac" style="left:1405px;top:505px;width:101px">M (26)</div>
<div class="ev fc" style="left:1405px;top:529px;width:101px">M (25)</div>
<div class="ev fc" style="left:1405px;top:553px;width:101px">F (20)</div>
<div class="ev bk" style="left:1405px;top:578px;width:101px"></div>
<div class="ev fc" style="left:1519px;top:239px;width:102px">F (52)</div>
<div class="ev bk" style="left:1519px;top:262px;width:102px"></div>
<div class="ev bk" style="left:1519px;top:287px;width:102px"></div>
<div class="ev rv" style="left:1519px;top:311px;width:102px">M (27)</div>
<div class="ev bk" style="left:1519px;top:335px;width:102px"></div>
<div class="ev bk" style="left:1519px;top:360px;width:102px"></div>
<div class="ev bk" style="left:1519px;top:384px;width:102px"></div>
<div class="ev bk" style="left:1519px;top:408px;width:102px"></div>
<div class="ev bk" style="left:1519px;top:432px;width:102px"></div>
<div class="ev bk" style="left:1519px;top:456px;width:102px"></div>
<div class="ev bk" style="left:1519px;top:481px;width:102px"></div>
<div class="ev bk" style="left:1519px;top:505px;width:102px"></div>
<div class="ev bk" style="left:1519px;top:529px;width:102px"></div>
<div class="ev bk" style="left:1519px;top:553px;width:102px"></div>
<div class="ev bk" style="left:1519px;top:578px;width:102px"></div>
<div class="ev ns2" style="left:1671px;top:239px;width:96px">M (56)<span class="rb">1</span></div>
<div class="ev fc" style="left:1671px;top:262px;width:96px">F (35)</div>
<div class="ev fc" style="left:1671px;top:287px;width:96px">F (31)</div>
<div class="ev hc" style="left:1671px;top:311px;width:96px">M (39)</div>
<div class="ev fc" style="left:1671px;top:335px;width:96px">M (34)</div>
<div class="ev em" style="left:1671px;top:360px;width:96px">12:00</div>
<div class="ev fc" style="left:1671px;top:384px;width:96px">M (28)</div>
<div class="ev fc" style="left:1671px;top:408px;width:96px">F (43)</div>
<div class="ev fc" style="left:1671px;top:432px;width:96px">F (22)</div>
<div class="ev ac" style="left:1671px;top:456px;width:96px">F (53)</div>
<div class="ev ac" style="left:1671px;top:481px;width:96px">M (36)</div>
<div class="ev hc" style="left:1671px;top:505px;width:96px">F (45)</div>
<div class="ev hc" style="left:1671px;top:529px;width:96px">M (23)</div>
<div class="ev fc" style="left:1671px;top:553px;width:96px">M (30)</div>
<div class="ev bk" style="left:1671px;top:578px;width:96px"></div>
<div class="ev fc" style="left:1780px;top:239px;width:96px">M (18)</div>
<div class="ev bk" style="left:1780px;top:262px;width:96px"></div>
<div class="ev bk" style="left:1780px;top:287px;width:96px"></div>
<div class="ev bk" style="left:1780px;top:311px;width:96px"></div>
<div class="ev bk" style="left:1780px;top:335px;width:96px"></div>
<div class="ev bk" style="left:1780px;top:360px;width:96px"></div>
<div class="ev bk" style="left:1780px;top:384px;width:96px"></div>
<div class="ev bk" style="left:1780px;top:408px;width:96px"></div>
<div class="ev bk" style="left:1780px;top:432px;width:96px"></div>
<div class="ev bk" style="left:1780px;top:456px;width:96px"></div>
<div class="ev bk" style="left:1780px;top:481px;width:96px"></div>
<div class="ev bk" style="left:1780px;top:505px;width:96px"></div>
<div class="ev bk" style="left:1780px;top:529px;width:96px"></div>
<div class="ev bk" style="left:1780px;top:553px;width:96px"></div>
<div class="ev bk" style="left:1780px;top:578px;width:96px"></div>
<div class="a" style="left:692px;top:257px;width:3px;height:3px;border-radius:50%;background:#e02020"></div>
<div class="log" style="left:71px;top:670px;width:259px"><div style="padding-left:0px;padding-top:0px"><div style="white-space:nowrap;padding-left:0px">Logged by Bobbie M on 12/02/2025 16:16</div><div style="white-space:nowrap">SPANISH VIEWER</div><div style="width:257px;height:1px;background:#8a8a8a;margin-top:0px"></div></div></div>
<div class="ta" style="left:71px;top:762px;width:261px">Enter notes here</div>
<div class="sv" style="left:71px;top:836px;width:257px"><div class="a" style="left:104.2px;top:5px;width:17px;height:17px"><svg width="17" height="17" viewBox="0 0 17 17" style="position:absolute;left:0;top:0"><circle cx="8.5" cy="8.6" r="8" fill="#f7f7f3" stroke="#d8d8d0" stroke-width="1.1"/><circle cx="8.5" cy="9.3" r="5.9" fill="#4a86c6"/><rect x="5.3" y="3.4" width="6.4" height="5.6" fill="#ececec"/><rect x="6.3" y="12" width="4.4" height="3" fill="#f4f4f4"/><rect x="6.3" y="12" width="1.3" height="3" fill="#333"/></svg></div><span class="a" style="left:127.0px;top:6px;line-height:14px;font-size:11.5px">Save</span></div>
<div class="log" style="left:337px;top:670px;width:259px"><div style="padding-left:0px;padding-top:0px"><div style="white-space:nowrap;padding-left:0px">Logged by Bobbie M on 12/17/2025 10:37</div><div style="white-space:nowrap">ENGLISH SPEAKER</div><div style="width:242px;height:1px;background:#8a8a8a;margin-top:0px"></div><div style="height:17px"></div><div style="white-space:nowrap;padding-left:0px">Logged by Bobbie M on 12/02/2025 16:16</div><div style="white-space:nowrap">SPANISH VIEWER</div></div><div class="a" style="right:0;top:0;width:15px;height:80px;background:#f8f8f8"></div>
<div class="a" style="right:3px;top:5px;width:0;height:0;border-left:4.5px solid transparent;border-right:4.5px solid transparent;border-bottom:7px solid #8a8a8a"></div>
<div class="a" style="right:3px;top:69px;width:0;height:0;border-left:4.5px solid transparent;border-right:4.5px solid transparent;border-top:7px solid #8a8a8a"></div>
<div class="a" style="right:3px;top:18px;width:9px;height:35px;border-radius:4.5px;background:#8a8a8a"></div></div>
<div class="ta" style="left:337px;top:762px;width:261px">Enter notes here</div>
<div class="sv" style="left:337px;top:836px;width:257px"><div class="a" style="left:104.2px;top:5px;width:17px;height:17px"><svg width="17" height="17" viewBox="0 0 17 17" style="position:absolute;left:0;top:0"><circle cx="8.5" cy="8.6" r="8" fill="#f7f7f3" stroke="#d8d8d0" stroke-width="1.1"/><circle cx="8.5" cy="9.3" r="5.9" fill="#4a86c6"/><rect x="5.3" y="3.4" width="6.4" height="5.6" fill="#ececec"/><rect x="6.3" y="12" width="4.4" height="3" fill="#f4f4f4"/><rect x="6.3" y="12" width="1.3" height="3" fill="#333"/></svg></div><span class="a" style="left:127.0px;top:6px;line-height:14px;font-size:11.5px">Save</span></div>
<div class="log" style="left:604px;top:670px;width:259px"><div style="padding-left:0px;padding-top:0px"><div style="white-space:nowrap;padding-left:0px">Logged by Bobbie M on 12/17/2025 10:37</div><div style="white-space:nowrap">ENGLISH SPEAKER</div><div style="width:242px;height:1px;background:#8a8a8a;margin-top:0px"></div><div style="height:17px"></div><div style="white-space:nowrap;padding-left:0px">Logged by Bobbie M on 12/02/2025 16:16</div><div style="white-space:nowrap">SPANISH VIEWER</div></div><div class="a" style="right:0;top:0;width:15px;height:80px;background:#f8f8f8"></div>
<div class="a" style="right:3px;top:5px;width:0;height:0;border-left:4.5px solid transparent;border-right:4.5px solid transparent;border-bottom:7px solid #8a8a8a"></div>
<div class="a" style="right:3px;top:69px;width:0;height:0;border-left:4.5px solid transparent;border-right:4.5px solid transparent;border-top:7px solid #8a8a8a"></div>
<div class="a" style="right:3px;top:18px;width:9px;height:35px;border-radius:4.5px;background:#8a8a8a"></div></div>
<div class="ta" style="left:604px;top:762px;width:261px">Enter notes here</div>
<div class="sv" style="left:604px;top:836px;width:257px"><div class="a" style="left:104.2px;top:5px;width:17px;height:17px"><svg width="17" height="17" viewBox="0 0 17 17" style="position:absolute;left:0;top:0"><circle cx="8.5" cy="8.6" r="8" fill="#f7f7f3" stroke="#d8d8d0" stroke-width="1.1"/><circle cx="8.5" cy="9.3" r="5.9" fill="#4a86c6"/><rect x="5.3" y="3.4" width="6.4" height="5.6" fill="#ececec"/><rect x="6.3" y="12" width="4.4" height="3" fill="#f4f4f4"/><rect x="6.3" y="12" width="1.3" height="3" fill="#333"/></svg></div><span class="a" style="left:127.0px;top:6px;line-height:14px;font-size:11.5px">Save</span></div>
<div class="log" style="left:871px;top:670px;width:259px"><div style="padding-left:0px;padding-top:0px"><div style="white-space:nowrap;padding-left:0px">Logged by Bobbie M on 12/02/2025 16:16</div><div style="white-space:nowrap">CHRISTMAS - CLOSED</div><div style="width:257px;height:1px;background:#8a8a8a;margin-top:0px"></div></div></div>
<div class="ta" style="left:871px;top:762px;width:261px">Enter notes here</div>
<div class="sv" style="left:871px;top:836px;width:257px"><div class="a" style="left:104.2px;top:5px;width:17px;height:17px"><svg width="17" height="17" viewBox="0 0 17 17" style="position:absolute;left:0;top:0"><circle cx="8.5" cy="8.6" r="8" fill="#f7f7f3" stroke="#d8d8d0" stroke-width="1.1"/><circle cx="8.5" cy="9.3" r="5.9" fill="#4a86c6"/><rect x="5.3" y="3.4" width="6.4" height="5.6" fill="#ececec"/><rect x="6.3" y="12" width="4.4" height="3" fill="#f4f4f4"/><rect x="6.3" y="12" width="1.3" height="3" fill="#333"/></svg></div><span class="a" style="left:127.0px;top:6px;line-height:14px;font-size:11.5px">Save</span></div>
<div class="log" style="left:1137px;top:670px;width:259px"><div style="padding-left:0px;padding-top:0px"><div style="white-space:nowrap;padding-left:0px">Logged by Bobbie M on 12/17/2025 10:38</div><div style="white-space:nowrap">ENGLISH SPEAKER</div><div style="width:242px;height:1px;background:#8a8a8a;margin-top:0px"></div><div style="height:17px"></div><div style="white-space:nowrap;padding-left:0px">Logged by Bobbie M on 12/02/2025 16:16</div><div style="white-space:nowrap">SPANISH VIEWER</div></div><div class="a" style="right:0;top:0;width:15px;height:80px;background:#f8f8f8"></div>
<div class="a" style="right:3px;top:5px;width:0;height:0;border-left:4.5px solid transparent;border-right:4.5px solid transparent;border-bottom:7px solid #8a8a8a"></div>
<div class="a" style="right:3px;top:69px;width:0;height:0;border-left:4.5px solid transparent;border-right:4.5px solid transparent;border-top:7px solid #8a8a8a"></div>
<div class="a" style="right:3px;top:18px;width:9px;height:35px;border-radius:4.5px;background:#8a8a8a"></div></div>
<div class="ta" style="left:1137px;top:762px;width:261px">Enter notes here</div>
<div class="sv" style="left:1137px;top:836px;width:257px"><div class="a" style="left:104.2px;top:5px;width:17px;height:17px"><svg width="17" height="17" viewBox="0 0 17 17" style="position:absolute;left:0;top:0"><circle cx="8.5" cy="8.6" r="8" fill="#f7f7f3" stroke="#d8d8d0" stroke-width="1.1"/><circle cx="8.5" cy="9.3" r="5.9" fill="#4a86c6"/><rect x="5.3" y="3.4" width="6.4" height="5.6" fill="#ececec"/><rect x="6.3" y="12" width="4.4" height="3" fill="#f4f4f4"/><rect x="6.3" y="12" width="1.3" height="3" fill="#333"/></svg></div><span class="a" style="left:127.0px;top:6px;line-height:14px;font-size:11.5px">Save</span></div>
<div class="log" style="left:1404px;top:670px;width:259px"><div style="padding-left:0px;padding-top:0px"><div style="white-space:nowrap;padding-left:0px">Logged by Bobbie M on 12/17/2025 10:38</div><div style="white-space:nowrap">ENGLISH SPEAKER</div><div style="width:242px;height:1px;background:#8a8a8a;margin-top:0px"></div><div style="height:17px"></div><div style="white-space:nowrap;padding-left:0px">Logged by Bobbie M on 12/02/2025 16:17</div><div style="white-space:nowrap">SPANISH VIEWER</div></div><div class="a" style="right:0;top:0;width:15px;height:80px;background:#f8f8f8"></div>
<div class="a" style="right:3px;top:5px;width:0;height:0;border-left:4.5px solid transparent;border-right:4.5px solid transparent;border-bottom:7px solid #8a8a8a"></div>
<div class="a" style="right:3px;top:69px;width:0;height:0;border-left:4.5px solid transparent;border-right:4.5px solid transparent;border-top:7px solid #8a8a8a"></div>
<div class="a" style="right:3px;top:18px;width:9px;height:35px;border-radius:4.5px;background:#8a8a8a"></div></div>
<div class="ta" style="left:1404px;top:762px;width:261px">Enter notes here</div>
<div class="sv" style="left:1404px;top:836px;width:257px"><div class="a" style="left:104.2px;top:5px;width:17px;height:17px"><svg width="17" height="17" viewBox="0 0 17 17" style="position:absolute;left:0;top:0"><circle cx="8.5" cy="8.6" r="8" fill="#f7f7f3" stroke="#d8d8d0" stroke-width="1.1"/><circle cx="8.5" cy="9.3" r="5.9" fill="#4a86c6"/><rect x="5.3" y="3.4" width="6.4" height="5.6" fill="#ececec"/><rect x="6.3" y="12" width="4.4" height="3" fill="#f4f4f4"/><rect x="6.3" y="12" width="1.3" height="3" fill="#333"/></svg></div><span class="a" style="left:127.0px;top:6px;line-height:14px;font-size:11.5px">Save</span></div>
<div class="log" style="left:1670px;top:670px;width:246px"><div style="padding-left:0px;padding-top:0px"><div style="white-space:nowrap;padding-left:0px">Logged by Bobbie M on 12/17/2025 10:38</div><div style="white-space:nowrap">ENGLISH SPEAKER</div><div style="width:229px;height:1px;background:#8a8a8a;margin-top:0px"></div><div style="height:17px"></div><div style="white-space:nowrap;padding-left:0px">Logged by Bobbie M on 12/02/2025 16:17</div><div style="white-space:nowrap">SPANISH VIEWER</div></div><div class="a" style="right:0;top:0;width:15px;height:80px;background:#f8f8f8"></div>
<div class="a" style="right:3px;top:5px;width:0;height:0;border-left:4.5px solid transparent;border-right:4.5px solid transparent;border-bottom:7px solid #8a8a8a"></div>
<div class="a" style="right:3px;top:69px;width:0;height:0;border-left:4.5px solid transparent;border-right:4.5px solid transparent;border-top:7px solid #8a8a8a"></div>
<div class="a" style="right:3px;top:18px;width:9px;height:35px;border-radius:4.5px;background:#8a8a8a"></div></div>
<div class="ta" style="left:1670px;top:762px;width:247px">Enter notes here</div>
<div class="sv" style="left:1670px;top:836px;width:244px"><div class="a" style="left:97.7px;top:5px;width:17px;height:17px"><svg width="17" height="17" viewBox="0 0 17 17" style="position:absolute;left:0;top:0"><circle cx="8.5" cy="8.6" r="8" fill="#f7f7f3" stroke="#d8d8d0" stroke-width="1.1"/><circle cx="8.5" cy="9.3" r="5.9" fill="#4a86c6"/><rect x="5.3" y="3.4" width="6.4" height="5.6" fill="#ececec"/><rect x="6.3" y="12" width="4.4" height="3" fill="#f4f4f4"/><rect x="6.3" y="12" width="1.3" height="3" fill="#333"/></svg></div><span class="a" style="left:120.5px;top:6px;line-height:14px;font-size:11.5px">Save</span></div>
<div class="a" style="left:0;top:876px;width:1919px;height:32px;background:#d2d2d2;border-top:1px solid #111;border-left:1px solid #111"></div>
<svg class="a" style="left:852px;top:878px" width="56" height="24" viewBox="0 0 56 24">
<path d="M9.4 4.7 A5.95 5.95 0 0 1 9.4 16.6 A2.4 5.95 0 0 0 9.4 4.7 Z" fill="#151515"/>
<circle cx="7.8" cy="6.25" r="1.3" fill="#30d8d0"/><circle cx="5.5" cy="8.4" r="0.9" fill="#111"/><circle cx="8.5" cy="8.4" r="0.8" fill="#8a8af0"/><circle cx="5.6" cy="11.9" r="1.6" fill="#1414f0"/><circle cx="8" cy="14.7" r="1.4" fill="#e86020"/><circle cx="5.5" cy="14.3" r="0.6" fill="#222"/>
<text x="18" y="16.6" font-family="Liberation Sans" font-size="16.4" fill="#151515" stroke="#151515" stroke-width="0.35" textLength="34.8" lengthAdjust="spacingAndGlyphs">NYX</text>
<text x="5" y="21.7" font-family="Liberation Sans" font-size="3.3" font-weight="bold" fill="#333" textLength="48" lengthAdjust="spacing">WE ARE THE SYSTEM</text>
</svg>
<div class="a" style="left:916px;top:881px;font-size:16px;color:#5a5a5a;line-height:18px;white-space:nowrap;text-shadow:1px 1px 1px #aaa">Onyx Black (v8.3.30)</div>
<div class="a" style="left:1696px;top:395px;width:230px;height:466px;opacity:.84">
<div class="a" style="left:0;top:0;width:230px;height:466px;background:#fff;border:1px solid #bbb;border-radius:4px;box-shadow:8px 8px 2px rgba(0,0,0,.3)"></div>
<div class="a" style="left:3px;top:2px;width:227px;height:29px;border:1px solid #c4c4c4;border-radius:4px;background:linear-gradient(#e6e6e6,#cecece)"></div>
<div class="a" style="left:16px;top:11px;font-size:12px;font-weight:bold;color:#222;line-height:15px">Key</div>
<svg class="a" style="left:204px;top:11.5px" width="10" height="10" viewBox="0 0 10 10"><path d="M1.2 1.2 L8.8 8.8 M8.8 1.2 L1.2 8.8" stroke="#222" stroke-width="2.8"/></svg>
<div class="a" style="left:16.5px;top:41px;font-size:11px;color:#2a2a2a;line-height:15px;white-space:nowrap;letter-spacing:0.62px">Booked</div>
<div class="a" style="left:163px;top:39px;width:42px;height:17px;border:1px solid #111;border-radius:2px;box-shadow:2px 2px 3px rgba(0,0,0,.4);background:linear-gradient(#f06a50 0%,#ee5a40 45%,#e03010 50%,#ec4828 100%);overflow:hidden"></div>
<div class="a" style="left:16.5px;top:61px;font-size:11px;color:#2a2a2a;line-height:15px;white-space:nowrap;letter-spacing:0.62px">Closed</div>
<div class="a" style="left:163px;top:59px;width:42px;height:17px;border:1px solid #111;border-radius:2px;box-shadow:2px 2px 3px rgba(0,0,0,.4);background:linear-gradient(#4c4c4c 0%,#606060 35%,#454545 48%,#0d0d0d 52%,#222 100%);overflow:hidden"></div>
<div class="a" style="left:16.5px;top:81px;font-size:11px;color:#2a2a2a;line-height:15px;white-space:nowrap;letter-spacing:0.62px">Incentive</div>
<div class="a" style="left:163px;top:79px;width:42px;height:17px;border:1px solid #111;border-radius:2px;box-shadow:2px 2px 3px rgba(0,0,0,.4);background:linear-gradient(#fde090 0%,#f8d070 45%,#f0b020 50%,#f8c848 100%);overflow:hidden"><span style="position:absolute;left:0;width:100%;text-align:center;top:0;font-size:11px;line-height:15px;color:#333">$</span></div>
<div class="a" style="left:16.5px;top:101px;font-size:11px;color:#2a2a2a;line-height:15px;white-space:nowrap;letter-spacing:0.62px">Locked</div>
<div class="a" style="left:163px;top:99px;width:42px;height:17px;border:1px solid #111;border-radius:2px;box-shadow:2px 2px 3px rgba(0,0,0,.4);background:linear-gradient(90deg,#c862b4 0%,#c862b4 48%,#c02aa0 48%,#e455c4 100%);overflow:hidden"><svg width="16" height="16" viewBox="0 0 16 16" style="position:absolute;left:0;top:0"><rect x="1" y="1" width="12" height="10" fill="#e4e4e4" stroke="#222" stroke-width="0.9"/><path d="M1.5 1.5 L7 6.5" stroke="#333" stroke-width="0.8"/><path d="M5 8.5 V5.8 A3.2 3.2 0 0 1 11.4 5.8 V8.5" fill="none" stroke="#333" stroke-width="2.4"/><path d="M5 8.5 V5.8 A3.2 3.2 0 0 1 11.4 5.8 V8.5" fill="none" stroke="#e0c020" stroke-width="1.2"/><rect x="3.2" y="8.3" width="10" height="6.4" fill="#f2d400" stroke="#222" stroke-width="0.9"/><rect x="7.4" y="10" width="1.6" height="3.6" fill="#333"/></svg></div>
<div class="a" style="left:16.5px;top:121px;font-size:11px;color:#2a2a2a;line-height:15px;white-space:nowrap;letter-spacing:0.62px">Empty</div>
<div class="a" style="left:163px;top:119px;width:42px;height:17px;border:1px solid #111;border-radius:2px;box-shadow:2px 2px 3px rgba(0,0,0,.4);background:linear-gradient(#bcd85c 0%,#a9cc40 45%,#7aaa0a 55%,#9cc62e 100%);overflow:hidden"></div>
<div class="a" style="left:16.5px;top:141px;font-size:11px;color:#2a2a2a;line-height:15px;white-space:nowrap;letter-spacing:0.62px">Full Confirmed</div>
<div class="a" style="left:163px;top:139px;width:42px;height:17px;border:1px solid #111;border-radius:2px;box-shadow:2px 2px 3px rgba(0,0,0,.4);background:linear-gradient(#2459a6 0%,#2a7fd0 45%,#2e88d8 60%,#80bcec 100%);overflow:hidden"></div>
<div class="a" style="left:16.5px;top:161px;font-size:11px;color:#2a2a2a;line-height:15px;white-space:nowrap;letter-spacing:0.62px">Half Confirmed</div>
<div class="a" style="left:163px;top:159px;width:42px;height:17px;border:1px solid #111;border-radius:2px;box-shadow:2px 2px 3px rgba(0,0,0,.4);background:linear-gradient(90deg,#b8e4f6 0%,#94d6f2 50%,#22b0e2 50%,#c4e8f6 100%);overflow:hidden"></div>
<div class="a" style="left:16.5px;top:181px;font-size:11px;color:#2a2a2a;line-height:15px;white-space:nowrap;letter-spacing:0.62px">Attempted Confirmed</div>
<div class="a" style="left:163px;top:179px;width:42px;height:17px;border:1px solid #111;border-radius:2px;box-shadow:2px 2px 3px rgba(0,0,0,.4);background:#922050;overflow:hidden"></div>
<div class="a" style="left:16.5px;top:201px;font-size:11px;color:#2a2a2a;line-height:15px;white-space:nowrap;letter-spacing:0.62px">Arrived</div>
<div class="a" style="left:163px;top:199px;width:42px;height:17px;border:1px solid #111;border-radius:2px;box-shadow:2px 2px 3px rgba(0,0,0,.4);background:linear-gradient(#f47058 0%,#f06a50 45%,#e84020 50%,#f04830 100%);overflow:hidden"><span class="smi" style="position:absolute;left:1px;top:1px;margin:0"><svg width="13" height="13" viewBox="0 0 13 13"><defs><radialGradient id="sg" cx="40%" cy="35%" r="70%"><stop offset="0" stop-color="#ffff90"/><stop offset="0.5" stop-color="#f8f400"/><stop offset="1" stop-color="#e0d400"/></radialGradient></defs><circle cx="6.5" cy="6.5" r="6.4" fill="url(#sg)"/><ellipse cx="4.3" cy="4.2" rx="0.85" ry="1.25" fill="#2a2a10"/><ellipse cx="8.6" cy="4.2" rx="0.85" ry="1.25" fill="#2a2a10"/><path d="M2.3 7.4 Q6.5 12.8 10.7 7.4" fill="none" stroke="#6a6400" stroke-width="1.1"/></svg></span></div>
<div class="a" style="left:16.5px;top:221px;font-size:11px;color:#2a2a2a;line-height:15px;white-space:nowrap;letter-spacing:0.62px">Arrived - Did Not View</div>
<div class="a" style="left:163px;top:219px;width:42px;height:17px;border:1px solid #111;border-radius:2px;box-shadow:2px 2px 3px rgba(0,0,0,.4);background:linear-gradient(#f47058 0%,#f06a50 45%,#e84020 50%,#f04830 100%);overflow:hidden"><span class="smi" style="position:absolute;left:1px;top:1px;margin:0"><svg width="13" height="13" viewBox="0 0 13 13"><circle cx="6.5" cy="6.5" r="6.4" fill="url(#sg)"/><ellipse cx="4.3" cy="4.2" rx="0.85" ry="1.25" fill="#2a2a10"/><ellipse cx="8.6" cy="4.2" rx="0.85" ry="1.25" fill="#2a2a10"/><path d="M3.6 6 L6.5 12.2 L9.4 6" fill="none" stroke="#e83a10" stroke-width="1.9" stroke-linejoin="round"/></svg></span></div>
<div class="a" style="left:16.5px;top:241px;font-size:11px;color:#2a2a2a;line-height:15px;white-space:nowrap;letter-spacing:0.62px">No Show</div>
<div class="a" style="left:163px;top:239px;width:42px;height:17px;border:1px solid #111;border-radius:2px;box-shadow:2px 2px 3px rgba(0,0,0,.4);background:linear-gradient(90deg,#f4ecfc 0%,#e2d2f6 50%,#d4bef4 50%,#c8b2f0 100%);overflow:hidden"></div>
<div class="a" style="left:16.5px;top:261px;font-size:11px;color:#2a2a2a;line-height:15px;white-space:nowrap;letter-spacing:0.62px">No Show (Claimed TC)</div>
<div class="a" style="left:163px;top:259px;width:42px;height:17px;border:1px solid #111;border-radius:2px;box-shadow:2px 2px 3px rgba(0,0,0,.4);background:linear-gradient(90deg,#a8a8a8 0%,#a8a8a8 50%,#808080 50%,#808080 100%);overflow:hidden"><span style="position:absolute;right:1px;top:1px;width:14px;height:14px;border-radius:50%;background:#222"></span></div>
<div class="a" style="left:16.5px;top:281px;font-size:11px;color:#2a2a2a;line-height:15px;white-space:nowrap;letter-spacing:0.62px">Closed And Locked</div>
<div class="a" style="left:163px;top:279px;width:42px;height:17px;border:1px solid #111;border-radius:2px;box-shadow:2px 2px 3px rgba(0,0,0,.4);background:linear-gradient(#4c4c4c 0%,#606060 35%,#454545 48%,#0d0d0d 52%,#222 100%);overflow:hidden"><svg width="16" height="16" viewBox="0 0 16 16" style="position:absolute;left:0;top:0"><rect x="1" y="1" width="12" height="10" fill="#e4e4e4" stroke="#222" stroke-width="0.9"/><path d="M1.5 1.5 L7 6.5" stroke="#333" stroke-width="0.8"/><path d="M5 8.5 V5.8 A3.2 3.2 0 0 1 11.4 5.8 V8.5" fill="none" stroke="#333" stroke-width="2.4"/><path d="M5 8.5 V5.8 A3.2 3.2 0 0 1 11.4 5.8 V8.5" fill="none" stroke="#e0c020" stroke-width="1.2"/><rect x="3.2" y="8.3" width="10" height="6.4" fill="#f2d400" stroke="#222" stroke-width="0.9"/><rect x="7.4" y="10" width="1.6" height="3.6" fill="#333"/></svg></div>
<div class="a" style="left:16.5px;top:301px;font-size:11px;color:#2a2a2a;line-height:15px;white-space:nowrap;letter-spacing:0.62px">Review</div>
<div class="a" style="left:163px;top:299px;width:42px;height:17px;border:1px solid #111;border-radius:2px;box-shadow:2px 2px 3px rgba(0,0,0,.4);background:linear-gradient(50deg,#fdcaa4 0%,#f29a5e 49%,#ec600e 49%,#f89a5c 100%);overflow:hidden"></div>
<div class="a" style="left:16.5px;top:321px;font-size:11px;color:#2a2a2a;line-height:15px;white-space:nowrap;letter-spacing:0.62px">Reshoot</div>
<div class="a" style="left:163px;top:319px;width:42px;height:17px;border:1px solid #111;border-radius:2px;box-shadow:2px 2px 3px rgba(0,0,0,.4);background:linear-gradient(50deg,#d8f4d8 0%,#8cd490 49%,#40b050 49%,#a8e4b0 100%);overflow:hidden"></div>
<div class="a" style="left:16.5px;top:341px;font-size:11px;color:#2a2a2a;line-height:15px;white-space:nowrap;letter-spacing:0.62px">Rebook</div>
<div class="a" style="left:163px;top:339px;width:42px;height:17px;border:1px solid #111;border-radius:2px;box-shadow:2px 2px 3px rgba(0,0,0,.4);background:linear-gradient(#f47058 0%,#f06a50 45%,#e84020 50%,#f04830 100%);overflow:hidden"><span style="position:absolute;left:2px;top:0;font-size:11px;font-weight:bold;color:#fff;line-height:15px">R</span></div>
<div class="a" style="left:16.5px;top:361px;font-size:11px;color:#2a2a2a;line-height:15px;white-space:nowrap;letter-spacing:0.62px">Reported</div>
<div class="a" style="left:163px;top:359px;width:42px;height:17px;border:1px solid #111;border-radius:2px;box-shadow:2px 2px 3px rgba(0,0,0,.4);background:#fff;overflow:hidden"><svg width="16" height="14" viewBox="0 0 16 14" style="position:absolute;left:1px;top:1px"><path d="M8 1 L15 13 H1 Z" fill="#f8a030" stroke="#e08010" stroke-width="1" stroke-linejoin="round"/><path d="M8 4.5 V9" stroke="#fff" stroke-width="1.6"/><circle cx="8" cy="11" r="0.9" fill="#fff"/></svg></div>
<div class="a" style="left:16.5px;top:381px;font-size:11px;color:#2a2a2a;line-height:15px;white-space:nowrap;letter-spacing:0.62px">Claimed (25)</div>
<div class="a" style="left:163px;top:379px;width:42px;height:17px;border:1px solid #111;border-radius:2px;box-shadow:2px 2px 3px rgba(0,0,0,.4);background:#fff;overflow:hidden"><span style="position:absolute;right:1px;top:1px;width:14px;height:14px;border-radius:50%;background:#fff;border:1px solid #111;font-size:9px;font-weight:bold;line-height:12px;text-align:center;color:#111;letter-spacing:-0.5px">25</span></div>
<div class="a" style="left:16.5px;top:401px;font-size:11px;color:#2a2a2a;line-height:15px;white-space:nowrap;letter-spacing:0.62px">Claimed (TC)</div>
<div class="a" style="left:163px;top:399px;width:42px;height:17px;border:1px solid #111;border-radius:2px;box-shadow:2px 2px 3px rgba(0,0,0,.4);background:#fff;overflow:hidden"><span style="position:absolute;right:1px;top:1px;width:14px;height:14px;border-radius:50%;background:#222"></span></div>
<div class="a" style="left:16.5px;top:421px;font-size:11px;color:#2a2a2a;line-height:15px;white-space:nowrap;letter-spacing:0.62px">Claimed (D)</div>
<div class="a" style="left:163px;top:419px;width:42px;height:17px;border:1px solid #111;border-radius:2px;box-shadow:2px 2px 3px rgba(0,0,0,.4);background:#fff;overflow:hidden"><span style="position:absolute;right:1px;top:1px;width:14px;height:14px;border-radius:50%;background:#fff;border:1px solid #111;font-size:9px;font-weight:bold;line-height:12px;text-align:center;color:#111;letter-spacing:-0.5px">25</span></div>
<div class="a" style="left:16.5px;top:441px;font-size:11px;color:#2a2a2a;line-height:15px;white-space:nowrap;letter-spacing:0.62px">Green Dot</div>
<div class="a" style="left:163px;top:439px;width:42px;height:17px;border:1px solid #111;border-radius:2px;box-shadow:2px 2px 3px rgba(0,0,0,.4);background:#fff;overflow:hidden"><span style="position:absolute;right:1px;top:1px;width:14px;height:14px;border-radius:50%;background:#1a8a1a;border:1px solid #111"></span></div>
</div></body></html>
